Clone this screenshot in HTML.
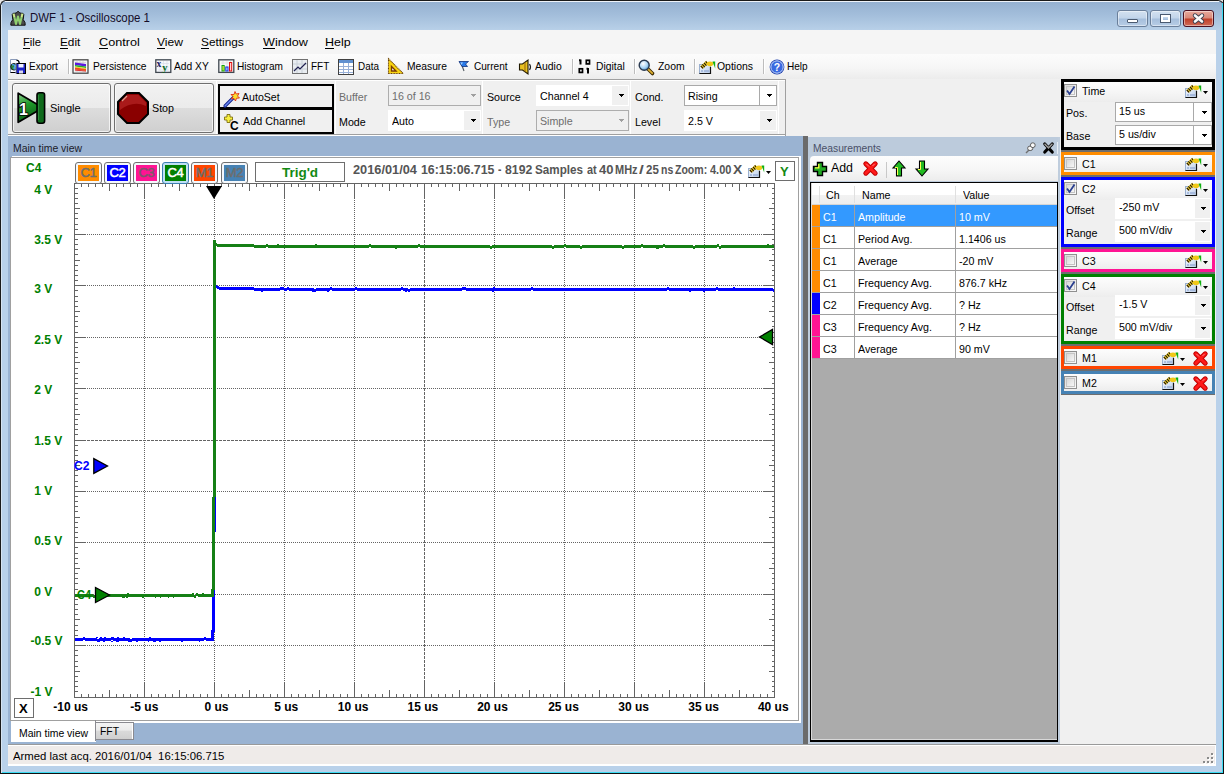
<!DOCTYPE html>
<html><head><meta charset="utf-8">
<style>
*{box-sizing:border-box}
html,body{margin:0;padding:0;width:1224px;height:774px;overflow:hidden;background:#e8e8e8}
body{position:relative;font-family:"Liberation Sans",sans-serif;font-size:11.5px;color:#000}
.a{position:absolute}
.t{position:absolute;white-space:nowrap;line-height:1}
svg{overflow:visible}
u{text-decoration:none;border-bottom:1px solid currentColor;display:inline-block;line-height:0.95}
</style></head><body>
<div class="a" style="left:0px;top:0px;width:1224px;height:774px;background:linear-gradient(#94b0d0 0px,#a3bedb 14px,#b8d0e8 29px,#b9d1ea 30px);border:1px solid #1a1a1a;border-right-color:#101010;border-bottom-color:#101010;border-radius:6px 6px 0 0"></div>
<div class="a" style="left:1223px;top:0px;width:1px;height:774px;background:#101010"></div>
<div class="a" style="left:0px;top:773px;width:1224px;height:1px;background:#101010"></div>
<div class="a" style="left:1222px;top:3px;width:1px;height:770px;background:#3cdcf4"></div>
<div class="a" style="left:1px;top:772px;width:1222px;height:1px;background:#3cdcf4"></div>
<div class="a" style="left:5px;top:1px;width:1214px;height:1px;background:#eef3f9"></div>
<div class="a" style="left:1px;top:5px;width:1px;height:768px;background:#d7e4f1"></div>
<svg class="a" style="left:10px;top:10px;" width="16" height="16" viewBox="0 0 16 16">
<path d="M0.8 15.2 L1 12.5 L2.8 9.5 L2.2 4.5 Q3.2 2.5 5 3.3 L6.8 2.6 Q8 -0.2 9.4 2.6 L11 3.3 Q12.8 2.5 13.8 4.5 L13.2 9.5 L15 12.5 L15.2 15.2 Z" fill="#4a4a4a" stroke="#101010" stroke-width="1"/>
<path d="M3.6 3.8 L6 14 L8 6.5 L10 14 L12.4 3.8" fill="none" stroke="#8fd070" stroke-width="2" stroke-linejoin="round"/>
<path d="M3.6 3.8 L4.4 7 M12.4 3.8 L11.6 7" stroke="#d8e890" stroke-width="1.6"/>
</svg>
<div class="t" style="left:30px;top:12.49px;font-size:12.6px;color:#140c28;transform:scaleX(0.9068);transform-origin:0 0;">DWF 1 - Oscilloscope 1</div>
<div class="a" style="left:1117px;top:10px;width:31px;height:17px;background:linear-gradient(#d3e1f0 0,#c2d5ea 45%,#a6bfdc 55%,#b7cde6 100%);border:1px solid #6a7f9a;border-radius:3px;box-shadow:inset 0 0 0 1px rgba(255,255,255,0.45)"></div>
<div class="a" style="left:1150px;top:10px;width:31px;height:17px;background:linear-gradient(#d3e1f0 0,#c2d5ea 45%,#a6bfdc 55%,#b7cde6 100%);border:1px solid #6a7f9a;border-radius:3px;box-shadow:inset 0 0 0 1px rgba(255,255,255,0.45)"></div>
<div class="a" style="left:1183px;top:10px;width:31px;height:17px;background:linear-gradient(#e8a99c 0,#d98a7a 45%,#c0402a 55%,#cf6b58 100%);border:1px solid #4a1020;border-radius:3px;box-shadow:inset 0 0 0 1px rgba(255,255,255,0.45)"></div>
<div class="a" style="left:1127px;top:19px;width:11px;height:4px;background:#fff;border:1px solid #4a5a70;border-radius:1px"></div>
<div class="a" style="left:1160px;top:14px;width:11px;height:9px;background:transparent;border:3px solid #fff;outline:1px solid #4a5a70;outline-offset:-1px"></div>
<svg class="a" style="left:1193px;top:14px;" width="11" height="9" viewBox="0 0 11 9"><path d="M2 1.5 L9 7.5 M9 1.5 L2 7.5" stroke="#3a4050" stroke-width="4.4" stroke-linecap="round"/><path d="M2 1.5 L9 7.5 M9 1.5 L2 7.5" stroke="#fafafa" stroke-width="2.6" stroke-linecap="round"/></svg>
<div class="a" style="left:8px;top:30px;width:1208px;height:24px;background:#f5f5f5"></div>
<div class="t" style="left:23.1px;top:36.97px;font-size:11.8px;color:#000;transform:scaleX(0.9519);transform-origin:0 0;">File</div>
<div class="a" style="left:23px;top:48px;width:7px;height:1px;background:#000"></div>
<div class="t" style="left:60.1px;top:36.97px;font-size:11.8px;color:#000;transform:scaleX(0.9983);transform-origin:0 0;">Edit</div>
<div class="a" style="left:60px;top:48px;width:8px;height:1px;background:#000"></div>
<div class="t" style="left:98.6px;top:36.97px;font-size:11.8px;color:#000;transform:scaleX(1.0725);transform-origin:0 0;">Control</div>
<div class="a" style="left:99px;top:48px;width:9px;height:1px;background:#000"></div>
<div class="t" style="left:157.4px;top:36.97px;font-size:11.8px;color:#000;transform:scaleX(1.0251);transform-origin:0 0;">View</div>
<div class="a" style="left:157px;top:48px;width:8px;height:1px;background:#000"></div>
<div class="t" style="left:201.2px;top:36.97px;font-size:11.8px;color:#000;transform:scaleX(1.0015);transform-origin:0 0;">Settings</div>
<div class="a" style="left:201px;top:48px;width:8px;height:1px;background:#000"></div>
<div class="t" style="left:262.6px;top:36.97px;font-size:11.8px;color:#000;transform:scaleX(1.0674);transform-origin:0 0;">Window</div>
<div class="a" style="left:263px;top:48px;width:12px;height:1px;background:#000"></div>
<div class="t" style="left:325.40000000000003px;top:36.97px;font-size:11.8px;color:#000;transform:scaleX(1.059);transform-origin:0 0;">Help</div>
<div class="a" style="left:325px;top:48px;width:9px;height:1px;background:#000"></div>
<div class="a" style="left:8px;top:54px;width:1208px;height:25px;background:linear-gradient(#fcfcfc,#f6f6f6 55%,#ececec)"></div>
<div class="t" style="left:29.1px;top:60.14px;font-size:11.6px;color:#000;transform:scaleX(0.862);transform-origin:0 0;">Export</div>
<svg class="a" style="left:8px;top:59px;" width="16" height="16" viewBox="0 0 16 16">
<path d="M2.5 0.5 H9 L11.5 3 V13.5 H2.5 Z" fill="#fbfbff" stroke="#8a9ab8"/>
<path d="M2.5 13.5 H10" stroke="#000" stroke-width="1"/>
<path d="M8.5 1.5 Q11 1 11 4" stroke="#000" stroke-width="1.2" fill="none"/>
<circle cx="6" cy="7.8" r="3.3" fill="#2a8a3a" stroke="#101010" stroke-width="0.9"/>
<path d="M4 6 Q6 5 7 7 Q5.5 9 6.5 10.5" stroke="#50a0ff" stroke-width="1.3" fill="none"/>
<rect x="8.5" y="4.5" width="9" height="10" fill="#1c22c8" stroke="#000" stroke-width="1"/>
<rect x="10.5" y="5" width="5" height="3.5" fill="#f0f0ff"/>
<rect x="11" y="11.5" width="4" height="3" fill="#d8d8f0"/>
<path d="M8 4 V15" stroke="#a0a8f0" stroke-width="1"/>
</svg>
<div class="t" style="left:92.5px;top:60.14px;font-size:11.6px;color:#000;transform:scaleX(0.8827);transform-origin:0 0;">Persistence</div>
<svg class="a" style="left:72px;top:59px;" width="16" height="16" viewBox="0 0 16 16">
<rect x="1" y="0.8" width="15" height="13.4" fill="#f4f4f4" stroke="#404040" stroke-width="1.2"/>
<path d="M3 3.5 H14 M3 12 H14 M5 2 V13 M8 2 V13 M11 2 V13" stroke="#d0d0d0" stroke-width="0.8"/>
<path d="M3 3.5 L14 5 L14 7.5 L3 6 Z" fill="#5a18e0"/>
<path d="M3 6 L14 7.5 L14 9 L3 7.5 Z" fill="#20b030"/>
<path d="M3 7.5 L14 9 L14 10 L3 8.5 Z" fill="#e8e020"/>
<path d="M3 8.5 L14 10 L14 12 L3 10.5 Z" fill="#f0501a"/>
<path d="M3 10.5 L14 12 L14 12.5 L3 11.5 Z" fill="#e01010"/>
</svg>
<div class="t" style="left:174px;top:60.14px;font-size:11.6px;color:#000;transform:scaleX(0.8846);transform-origin:0 0;">Add XY</div>
<svg class="a" style="left:154.5px;top:59px;" width="16" height="16" viewBox="0 0 16 16">
<rect x="0.8" y="0.8" width="15" height="12.6" fill="#f6f8fb" stroke="#404850" stroke-width="1.3"/>
<path d="M3 4.5 H14 M3 8 H14 M3 11 H14 M5 2 V13 M8.5 2 V13 M12 2 V13" stroke="#d8dde8" stroke-width="0.7"/>
<text x="1.5" y="7.5" font-family="Liberation Serif" font-size="9.5" font-weight="bold" fill="#1a1a60">x</text>
<text x="7.3" y="11.8" font-family="Liberation Serif" font-size="10.5" font-weight="bold" fill="#0a6a1a">y</text>
</svg>
<div class="t" style="left:237.3px;top:60.14px;font-size:11.6px;color:#000;transform:scaleX(0.8702);transform-origin:0 0;">Histogram</div>
<svg class="a" style="left:217.5px;top:59px;" width="16" height="16" viewBox="0 0 16 16">
<rect x="0.8" y="0.8" width="15" height="12.6" fill="#f8f8f8" stroke="#404850" stroke-width="1.3"/>
<path d="M3 4 H14 M5 2 V13 M9 2 V13 M12.5 2 V13" stroke="#dadada" stroke-width="0.7"/>
<rect x="4" y="6.5" width="2.2" height="5.5" fill="#f0f040" stroke="#10a010" stroke-width="1"/>
<rect x="7.8" y="8" width="2.2" height="4" fill="#c0d0ff" stroke="#1030e0" stroke-width="1"/>
<rect x="11.5" y="3.5" width="2.2" height="8.5" fill="#ffd0d0" stroke="#e01010" stroke-width="1"/>
</svg>
<div class="t" style="left:311.2px;top:60.14px;font-size:11.6px;color:#000;transform:scaleX(0.8562);transform-origin:0 0;">FFT</div>
<svg class="a" style="left:292px;top:59px;" width="16" height="16" viewBox="0 0 16 16">
<rect x="0.5" y="0.5" width="15" height="14" fill="#e8ecf0" stroke="#707070"/>
<path d="M1 5 H15 M1 10 H15 M5 1 V14 M10 1 V14" stroke="#c8d0d8"/>
<path d="M2 12 L6 8 L8 10 L14 4" stroke="#202050" stroke-width="1.2" fill="none"/>
</svg>
<div class="t" style="left:357.5px;top:60.14px;font-size:11.6px;color:#000;transform:scaleX(0.853);transform-origin:0 0;">Data</div>
<svg class="a" style="left:338px;top:59px;" width="16" height="16" viewBox="0 0 16 16">
<rect x="0.5" y="0.5" width="15" height="15" fill="#fff" stroke="#404040"/>
<rect x="1" y="1" width="14" height="3" fill="#6090d0"/>
<path d="M1 7.5 H15 M1 10.5 H15 M1 13.5 H15 M5.5 4 V15 M10.5 4 V15" stroke="#98b0d8"/>
</svg>
<div class="t" style="left:407px;top:60.14px;font-size:11.6px;color:#000;transform:scaleX(0.8863);transform-origin:0 0;">Measure</div>
<div class="t" style="left:474px;top:60.14px;font-size:11.6px;color:#000;transform:scaleX(0.8686);transform-origin:0 0;">Current</div>
<div class="t" style="left:535.3px;top:60.14px;font-size:11.6px;color:#000;transform:scaleX(0.8999);transform-origin:0 0;">Audio</div>
<svg class="a" style="left:518px;top:59px;" width="16" height="16" viewBox="0 0 16 16">
<path d="M1.5 5 H4.5 L10 1 V15 L4.5 11 H1.5 Z" fill="#e8c020" stroke="#201800" stroke-width="1.1"/>
<path d="M7 3.5 V12.5" stroke="#a07010" stroke-width="1.2"/>
<path d="M11.5 5 Q13.5 8 11.5 11" stroke="#202020" stroke-width="1.2" fill="none"/>
</svg>
<div class="t" style="left:595.7px;top:60.14px;font-size:11.6px;color:#000;transform:scaleX(0.8903);transform-origin:0 0;">Digital</div>
<div class="t" style="left:657.9px;top:60.14px;font-size:11.6px;color:#000;transform:scaleX(0.8971);transform-origin:0 0;">Zoom</div>
<svg class="a" style="left:638px;top:59px;" width="16" height="16" viewBox="0 0 16 16">
<defs><radialGradient id="zg" cx="0.4" cy="0.35" r="0.7"><stop offset="0" stop-color="#ffffff"/><stop offset="0.6" stop-color="#a8d4f4"/><stop offset="1" stop-color="#4a90c8"/></radialGradient></defs>
<path d="M9.5 9.5 L14.5 14.5" stroke="#3a2a00" stroke-width="3.6" stroke-linecap="round"/>
<path d="M9.8 9.8 L14.2 14.2" stroke="#e0b030" stroke-width="1.8" stroke-linecap="round"/>
<circle cx="6.2" cy="6.2" r="5" fill="url(#zg)" stroke="#2a3a50" stroke-width="1.4"/>
</svg>
<div class="t" style="left:717px;top:60.14px;font-size:11.6px;color:#000;transform:scaleX(0.9005);transform-origin:0 0;">Options</div>
<div class="t" style="left:787px;top:60.14px;font-size:11.6px;color:#000;transform:scaleX(0.8676);transform-origin:0 0;">Help</div>
<svg class="a" style="left:769px;top:59px;" width="16" height="16" viewBox="0 0 16 16">
<circle cx="8" cy="8" r="7.4" fill="#1a3aa8"/>
<circle cx="8" cy="8" r="6.2" fill="#3a6ae0" stroke="#c8dcff" stroke-width="1"/>
<text x="8" y="12.2" text-anchor="middle" font-family="Liberation Sans" font-size="10.5" font-weight="bold" fill="#fff">?</text>
</svg>
<svg class="a" style="left:387px;top:58px;" width="17" height="17" viewBox="0 0 17 17">
<path d="M1.5 0.8 L16.2 15.5 L1.5 15.5 Z" fill="#f8d410" stroke="#6a4000" stroke-width="1.1" stroke-dasharray="1 0.6"/>
<path d="M4.5 8.5 L9 13 L4.5 13 Z" fill="#fff" stroke="#7a3a00" stroke-width="1.4"/>
</svg>
<svg class="a" style="left:458px;top:60px;" width="12" height="12" viewBox="0 0 12 12">
<path d="M3 3 L6 11" stroke="#505860" stroke-width="1.1"/>
<path d="M1 1.5 L10.5 1.5 L7.5 4 L9.5 6.5 L4 6.5 Z" fill="#2a7ae8" stroke="#10307a" stroke-width="0.8"/>
<path d="M2.5 2.5 L5 2.5 L3.5 5 Z" fill="#a0d0ff"/>
</svg>
<svg class="a" style="left:578px;top:59px;" width="13" height="15" viewBox="0 0 13 15">
<path d="M2.5 0.5 V5.5 M1 1.3 H2.5" stroke="#000" stroke-width="2"/>
<rect x="8.3" y="1.3" width="3.2" height="3.6" fill="none" stroke="#000" stroke-width="1.7"/>
<rect x="1.3" y="9.8" width="3.2" height="3.6" fill="none" stroke="#000" stroke-width="1.7"/>
<path d="M10 9 V14.5 M8.5 9.8 H10" stroke="#000" stroke-width="2"/>
</svg>
<div class="a" style="left:68px;top:59px;width:2px;height:15px;border-left:1px solid #bdbdbd;border-right:1px solid #fff"></div>
<div class="a" style="left:572px;top:59px;width:2px;height:15px;border-left:1px solid #bdbdbd;border-right:1px solid #fff"></div>
<div class="a" style="left:634px;top:59px;width:2px;height:15px;border-left:1px solid #bdbdbd;border-right:1px solid #fff"></div>
<div class="a" style="left:694px;top:59px;width:2px;height:15px;border-left:1px solid #bdbdbd;border-right:1px solid #fff"></div>
<div class="a" style="left:763px;top:59px;width:2px;height:15px;border-left:1px solid #bdbdbd;border-right:1px solid #fff"></div>
<div class="a" style="left:8px;top:79px;width:1052px;height:57px;background:#f0f0f0"></div>
<div class="a" style="left:8px;top:79px;width:778px;height:1px;background:#a0a0a0"></div>
<div class="a" style="left:8px;top:80px;width:778px;height:1px;background:#fff"></div>
<div class="a" style="left:8px;top:134px;width:778px;height:1px;background:#a0a0a0"></div>
<div class="a" style="left:8px;top:135px;width:778px;height:1px;background:#fff"></div>
<div class="a" style="left:785px;top:79px;width:1px;height:57px;background:#a0a0a0"></div>
<div class="a" style="left:12px;top:83px;width:99px;height:50px;border:1px solid #707070;border-radius:3px;background:linear-gradient(#f2f2f2 0,#ebebeb 49%,#dddddd 50%,#cfcfcf 100%);box-shadow:inset 0 0 0 1px rgba(255,255,255,0.7)"></div>
<div class="a" style="left:114px;top:83px;width:100px;height:50px;border:1px solid #707070;border-radius:3px;background:linear-gradient(#f2f2f2 0,#ebebeb 49%,#dddddd 50%,#cfcfcf 100%);box-shadow:inset 0 0 0 1px rgba(255,255,255,0.7)"></div>
<div class="t" style="left:50.2px;top:101.64px;font-size:11.6px;color:#000;transform:scaleX(0.952);transform-origin:0 0;">Single</div>
<div class="t" style="left:152px;top:101.94px;font-size:11.6px;color:#000;transform:scaleX(0.9219);transform-origin:0 0;">Stop</div>
<svg class="a" style="left:17px;top:92px;" width="28" height="32" viewBox="0 0 28 32">
<defs><linearGradient id="sg" x1="0" y1="0" x2="0.3" y2="1"><stop offset="0" stop-color="#8fd08f"/><stop offset="0.45" stop-color="#1f9a2a"/><stop offset="1" stop-color="#0b5a15"/></linearGradient></defs>
<path d="M1.2 1.2 L26 15.8 L1.2 30.2 Z" fill="url(#sg)" stroke="#000" stroke-width="1.8" stroke-linejoin="round"/>
<rect x="20" y="0.8" width="7.6" height="30.4" rx="2.2" fill="#0f6a1c" stroke="#000" stroke-width="1.6"/>
<path d="M21.5 3 V28" stroke="#2a8a3a" stroke-width="1"/>
<text x="2" y="22.5" font-family="Liberation Sans" font-size="16" font-weight="bold" fill="#fff" stroke="#000" stroke-width="1.6" paint-order="stroke">1</text>
</svg>
<svg class="a" style="left:117px;top:92px;" width="32" height="32" viewBox="0 0 32 32">
<path d="M10 1 H22 L31 10 V22 L22 31 H10 L1 22 V10 Z" fill="#8a0000" stroke="#000" stroke-width="2"/>
<path d="M10.5 3 H21.5 L29 10.5 V14 Q16 8 3 18 V10.5 Z" fill="#b02020" opacity="0.8"/>
<path d="M5 9 L10 4" stroke="#e0a090" stroke-width="1.2"/>
</svg>
<div class="a" style="left:216px;top:81px;width:1px;height:53px;background:#a0a0a0;border-right:1px solid #fff"></div>
<div class="a" style="left:218px;top:84px;width:116px;height:25px;border:2px solid #000;background:#f0f0f0"></div>
<div class="a" style="left:218px;top:108px;width:116px;height:26px;border:2px solid #000;background:#f0f0f0"></div>
<div class="t" style="left:242px;top:90.94px;font-size:11.6px;color:#000;transform:scaleX(0.9134);transform-origin:0 0;">AutoSet</div>
<div class="t" style="left:243px;top:115.44px;font-size:11.6px;color:#000;transform:scaleX(0.9288);transform-origin:0 0;">Add Channel</div>
<svg class="a" style="left:223px;top:91px;" width="17" height="17" viewBox="0 0 17 17">
<path d="M2 15 L11 6" stroke="#10208a" stroke-width="3.2" stroke-linecap="round"/>
<path d="M2 15 L11 6" stroke="#6a8af0" stroke-width="1.4" stroke-linecap="round"/>
<path d="M12 0.5 L13.2 3 L16 2.5 L14.5 5 L16.5 7 L13.5 7.2 L12.5 10 L11 7.5 L8.5 8 L10 5.5 L8 3.5 L11 3.5 Z" fill="#f8e030" stroke="#e03010" stroke-width="0.9"/>
</svg>
<svg class="a" style="left:224px;top:114px;" width="17" height="17" viewBox="0 0 17 17">
<path d="M3 0.5 H6 V3 H8.5 V6 H6 V8.5 H3 V6 H0.5 V3 H3 Z" fill="#f8f040" stroke="#807010" stroke-width="0.9"/>
<text x="6" y="16" font-family="Liberation Sans" font-size="12" font-weight="bold" fill="#000">C</text>
</svg>
<div class="a" style="left:335px;top:81px;width:1px;height:53px;background:#a0a0a0;border-right:1px solid #fff"></div>
<div class="a" style="left:482px;top:81px;width:1px;height:53px;background:#a0a0a0;border-right:1px solid #fff"></div>
<div class="a" style="left:630px;top:81px;width:1px;height:53px;background:#a0a0a0;border-right:1px solid #fff"></div>
<div class="a" style="left:778px;top:81px;width:1px;height:53px;background:#a0a0a0;border-right:1px solid #fff"></div>
<div class="t" style="left:339px;top:91.14px;font-size:11.6px;color:#6d6d6d;transform:scaleX(0.92);transform-origin:0 0;">Buffer</div>
<div class="t" style="left:339px;top:116.14px;font-size:11.6px;color:#000;transform:scaleX(0.92);transform-origin:0 0;">Mode</div>
<div class="a" style="left:388px;top:85px;width:93px;height:21px;background:#f0f0f0;border:1px solid #adadad"></div>
<div class="t" style="left:392px;top:90.14px;font-size:11.6px;color:#6d6d6d;transform:scaleX(0.92);transform-origin:0 0;">16 of 16</div>
<svg class="a" style="left:470px;top:94px;shape-rendering:crispEdges" width="6" height="3" viewBox="0 0 6 3"><path d="M0 0 L6 0 L3 3 Z" fill="#a0a0a0"/></svg>
<div class="a" style="left:388px;top:110px;width:93px;height:21px;background:#fff"></div>
<div class="a" style="left:464px;top:111px;width:16px;height:19px;background:#f0f0f0"></div>
<div class="t" style="left:392px;top:115.14px;font-size:11.6px;color:#000;transform:scaleX(0.92);transform-origin:0 0;">Auto</div>
<svg class="a" style="left:470px;top:119px;shape-rendering:crispEdges" width="6" height="3" viewBox="0 0 6 3"><path d="M0 0 L6 0 L3 3 Z" fill="#000"/></svg>
<div class="t" style="left:487px;top:91.14px;font-size:11.6px;color:#000;transform:scaleX(0.92);transform-origin:0 0;">Source</div>
<div class="t" style="left:487px;top:116.14px;font-size:11.6px;color:#6d6d6d;transform:scaleX(0.92);transform-origin:0 0;">Type</div>
<div class="a" style="left:536px;top:85px;width:93px;height:21px;background:#fff"></div>
<div class="a" style="left:612px;top:86px;width:16px;height:19px;background:#f0f0f0"></div>
<div class="t" style="left:540px;top:90.14px;font-size:11.6px;color:#000;transform:scaleX(0.92);transform-origin:0 0;">Channel 4</div>
<svg class="a" style="left:618px;top:94px;shape-rendering:crispEdges" width="6" height="3" viewBox="0 0 6 3"><path d="M0 0 L6 0 L3 3 Z" fill="#000"/></svg>
<div class="a" style="left:536px;top:110px;width:93px;height:21px;background:#f0f0f0;border:1px solid #adadad"></div>
<div class="t" style="left:540px;top:115.14px;font-size:11.6px;color:#6d6d6d;transform:scaleX(0.92);transform-origin:0 0;">Simple</div>
<svg class="a" style="left:618px;top:119px;shape-rendering:crispEdges" width="6" height="3" viewBox="0 0 6 3"><path d="M0 0 L6 0 L3 3 Z" fill="#a0a0a0"/></svg>
<div class="t" style="left:635px;top:91.14px;font-size:11.6px;color:#000;transform:scaleX(0.92);transform-origin:0 0;">Cond.</div>
<div class="t" style="left:635px;top:116.14px;font-size:11.6px;color:#000;transform:scaleX(0.92);transform-origin:0 0;">Level</div>
<div class="a" style="left:684px;top:85px;width:93px;height:21px;background:#fff;border:1px solid #a9a9a9"></div>
<div class="a" style="left:759px;top:86px;width:1px;height:19px;background:#a9a9a9"></div>
<div class="t" style="left:688px;top:90.14px;font-size:11.6px;color:#000;transform:scaleX(0.92);transform-origin:0 0;">Rising</div>
<svg class="a" style="left:766px;top:94px;shape-rendering:crispEdges" width="6" height="3" viewBox="0 0 6 3"><path d="M0 0 L6 0 L3 3 Z" fill="#000"/></svg>
<div class="a" style="left:684px;top:110px;width:93px;height:21px;background:#fff"></div>
<div class="a" style="left:760px;top:111px;width:16px;height:19px;background:#f0f0f0"></div>
<div class="t" style="left:688px;top:115.14px;font-size:11.6px;color:#000;transform:scaleX(0.92);transform-origin:0 0;">2.5 V</div>
<svg class="a" style="left:766px;top:119px;shape-rendering:crispEdges" width="6" height="3" viewBox="0 0 6 3"><path d="M0 0 L6 0 L3 3 Z" fill="#000"/></svg>
<div class="a" style="left:8px;top:136px;width:1052px;height:608px;background:#9ab3d2"></div>
<div class="a" style="left:8px;top:744px;width:1208px;height:22px;background:#efebe9;border-top:1px solid #9a9a9a;border-bottom:2px solid #fff"></div>
<div class="a" style="left:8px;top:745px;width:1208px;height:1px;background:#fff"></div>
<div class="a" style="left:1211px;top:753px;width:2px;height:2px;background:#8a8a8a;box-shadow:1px 1px 0 #fff"></div>
<div class="a" style="left:1207px;top:757px;width:2px;height:2px;background:#8a8a8a;box-shadow:1px 1px 0 #fff"></div>
<div class="a" style="left:1211px;top:757px;width:2px;height:2px;background:#8a8a8a;box-shadow:1px 1px 0 #fff"></div>
<div class="a" style="left:1203px;top:761px;width:2px;height:2px;background:#8a8a8a;box-shadow:1px 1px 0 #fff"></div>
<div class="a" style="left:1207px;top:761px;width:2px;height:2px;background:#8a8a8a;box-shadow:1px 1px 0 #fff"></div>
<div class="a" style="left:1211px;top:761px;width:2px;height:2px;background:#8a8a8a;box-shadow:1px 1px 0 #fff"></div>
<div class="a" style="left:1215px;top:745px;width:1px;height:20px;background:#fff"></div>
<div class="t" style="left:12.5px;top:749.64px;font-size:11.6px;color:#000;transform:scaleX(0.9789);transform-origin:0 0;">Armed last acq. 2016/01/04&nbsp; 16:15:06.715</div>
<svg class="a" style="left:699px;top:60px;" width="17" height="14" viewBox="0 0 17 14">
<defs><linearGradient id="docg2" x1="0" y1="0" x2="1" y2="1"><stop offset="0" stop-color="#f4f8fe"/><stop offset="1" stop-color="#b8cce8"/></linearGradient></defs>
<rect x="0.5" y="4.5" width="11" height="9" fill="url(#docg2)" stroke="#9ab0d0"/>
<path d="M0.5 13.5 H11.5 V7" stroke="#111" stroke-width="1.2" fill="none"/>
<path d="M2 11 H4 M5 11 H10" stroke="#9ab0d8" stroke-width="1.3"/>
<circle cx="3.3" cy="7.3" r="0.9" fill="#d02020"/>
<path d="M2.5 7.5 L8.5 2.2" stroke="#f0d030" stroke-width="3.6"/>
<path d="M2.5 7.5 L8.5 2.2" stroke="#201800" stroke-width="3.6" stroke-dasharray="1.1 1.1"/>
<ellipse cx="11" cy="3.8" rx="3.3" ry="2.4" fill="#f0c818"/>
<path d="M13.5 1.5 L16.2 1.5 L16.2 8.5 Z" fill="#10b010"/>
</svg>
<div class="t" style="left:13px;top:142.14px;font-size:11.6px;color:#1b1b2b;transform:scaleX(0.8995);transform-origin:0 0;">Main time view</div>
<div class="a" style="left:10px;top:157px;width:789px;height:564px;background:#fff;border:1px solid #a0a0a0;border-right-color:#a0a0a0"></div>
<div class="a" style="left:12px;top:156px;width:789px;height:1px;background:#fff"></div>
<div class="a" style="left:799px;top:157px;width:2px;height:566px;background:#fff"></div>
<div class="a" style="left:11px;top:721px;width:790px;height:2px;background:#fff"></div>
<div class="a" style="left:11px;top:721px;width:85px;height:21px;background:#fff"></div>
<div class="t" style="left:18.5px;top:726.64px;font-size:11.6px;color:#000;transform:scaleX(0.8995);transform-origin:0 0;">Main time view</div>
<div class="a" style="left:95px;top:720px;width:1px;height:21px;background:#8a8a90"></div>
<div class="a" style="left:96px;top:722px;width:38px;height:18px;background:linear-gradient(#f4f4f4,#ebebeb 45%,#dadada 50%,#cfcfcf);border:1px solid #8a8a90;border-left:none;box-shadow:inset -1px 0 0 #fff"></div>
<div class="t" style="left:100px;top:725.14px;font-size:11.6px;color:#000;transform:scaleX(0.8938);transform-origin:0 0;">FFT</div>
<svg class="a" style="left:0px;top:0px;left:0;top:0" width="1224" height="774" viewBox="0 0 1224 774"><line x1="144.5" y1="184" x2="144.5" y2="697" stroke="#646464" stroke-width="1" stroke-dasharray="1 1"/><line x1="214.5" y1="184" x2="214.5" y2="697" stroke="#646464" stroke-width="1" stroke-dasharray="1 1"/><line x1="284.5" y1="184" x2="284.5" y2="697" stroke="#646464" stroke-width="1" stroke-dasharray="1 1"/><line x1="354.5" y1="184" x2="354.5" y2="697" stroke="#646464" stroke-width="1" stroke-dasharray="1 1"/><line x1="424.5" y1="184" x2="424.5" y2="697" stroke="#646464" stroke-width="1" stroke-dasharray="3 1"/><line x1="494.5" y1="184" x2="494.5" y2="697" stroke="#646464" stroke-width="1" stroke-dasharray="1 1"/><line x1="564.5" y1="184" x2="564.5" y2="697" stroke="#646464" stroke-width="1" stroke-dasharray="1 1"/><line x1="634.5" y1="184" x2="634.5" y2="697" stroke="#646464" stroke-width="1" stroke-dasharray="1 1"/><line x1="704.5" y1="184" x2="704.5" y2="697" stroke="#646464" stroke-width="1" stroke-dasharray="1 1"/><line x1="75" y1="234.5" x2="774" y2="234.5" stroke="#646464" stroke-width="1" stroke-dasharray="1 1"/><line x1="75" y1="285.5" x2="774" y2="285.5" stroke="#646464" stroke-width="1" stroke-dasharray="1 1"/><line x1="75" y1="337.5" x2="774" y2="337.5" stroke="#646464" stroke-width="1" stroke-dasharray="1 1"/><line x1="75" y1="388.5" x2="774" y2="388.5" stroke="#646464" stroke-width="1" stroke-dasharray="1 1"/><line x1="75" y1="440.5" x2="774" y2="440.5" stroke="#646464" stroke-width="1" stroke-dasharray="3 1"/><line x1="75" y1="491.5" x2="774" y2="491.5" stroke="#646464" stroke-width="1" stroke-dasharray="1 1"/><line x1="75" y1="542.5" x2="774" y2="542.5" stroke="#646464" stroke-width="1" stroke-dasharray="1 1"/><line x1="75" y1="594.5" x2="774" y2="594.5" stroke="#646464" stroke-width="1" stroke-dasharray="1 1"/><line x1="75" y1="645.5" x2="774" y2="645.5" stroke="#646464" stroke-width="1" stroke-dasharray="1 1"/><rect x="74.5" y="183.5" width="700" height="514" fill="none" stroke="#646464" stroke-width="1"/><line x1="74.5" y1="183" x2="74.5" y2="198" stroke="#646464"/><line x1="74.5" y1="697" x2="74.5" y2="683" stroke="#646464"/><line x1="81.5" y1="183" x2="81.5" y2="187" stroke="#646464"/><line x1="81.5" y1="697" x2="81.5" y2="694" stroke="#646464"/><line x1="88.5" y1="183" x2="88.5" y2="187" stroke="#646464"/><line x1="88.5" y1="697" x2="88.5" y2="694" stroke="#646464"/><line x1="95.5" y1="183" x2="95.5" y2="187" stroke="#646464"/><line x1="95.5" y1="697" x2="95.5" y2="694" stroke="#646464"/><line x1="102.5" y1="183" x2="102.5" y2="187" stroke="#646464"/><line x1="102.5" y1="697" x2="102.5" y2="694" stroke="#646464"/><line x1="109.5" y1="183" x2="109.5" y2="191" stroke="#646464"/><line x1="109.5" y1="697" x2="109.5" y2="690" stroke="#646464"/><line x1="116.5" y1="183" x2="116.5" y2="187" stroke="#646464"/><line x1="116.5" y1="697" x2="116.5" y2="694" stroke="#646464"/><line x1="123.5" y1="183" x2="123.5" y2="187" stroke="#646464"/><line x1="123.5" y1="697" x2="123.5" y2="694" stroke="#646464"/><line x1="130.5" y1="183" x2="130.5" y2="187" stroke="#646464"/><line x1="130.5" y1="697" x2="130.5" y2="694" stroke="#646464"/><line x1="137.5" y1="183" x2="137.5" y2="187" stroke="#646464"/><line x1="137.5" y1="697" x2="137.5" y2="694" stroke="#646464"/><line x1="144.5" y1="183" x2="144.5" y2="198" stroke="#646464"/><line x1="144.5" y1="697" x2="144.5" y2="683" stroke="#646464"/><line x1="151.5" y1="183" x2="151.5" y2="187" stroke="#646464"/><line x1="151.5" y1="697" x2="151.5" y2="694" stroke="#646464"/><line x1="158.5" y1="183" x2="158.5" y2="187" stroke="#646464"/><line x1="158.5" y1="697" x2="158.5" y2="694" stroke="#646464"/><line x1="165.5" y1="183" x2="165.5" y2="187" stroke="#646464"/><line x1="165.5" y1="697" x2="165.5" y2="694" stroke="#646464"/><line x1="172.5" y1="183" x2="172.5" y2="187" stroke="#646464"/><line x1="172.5" y1="697" x2="172.5" y2="694" stroke="#646464"/><line x1="179.5" y1="183" x2="179.5" y2="191" stroke="#646464"/><line x1="179.5" y1="697" x2="179.5" y2="690" stroke="#646464"/><line x1="186.5" y1="183" x2="186.5" y2="187" stroke="#646464"/><line x1="186.5" y1="697" x2="186.5" y2="694" stroke="#646464"/><line x1="193.5" y1="183" x2="193.5" y2="187" stroke="#646464"/><line x1="193.5" y1="697" x2="193.5" y2="694" stroke="#646464"/><line x1="200.5" y1="183" x2="200.5" y2="187" stroke="#646464"/><line x1="200.5" y1="697" x2="200.5" y2="694" stroke="#646464"/><line x1="207.5" y1="183" x2="207.5" y2="187" stroke="#646464"/><line x1="207.5" y1="697" x2="207.5" y2="694" stroke="#646464"/><line x1="214.5" y1="183" x2="214.5" y2="198" stroke="#646464"/><line x1="214.5" y1="697" x2="214.5" y2="683" stroke="#646464"/><line x1="221.5" y1="183" x2="221.5" y2="187" stroke="#646464"/><line x1="221.5" y1="697" x2="221.5" y2="694" stroke="#646464"/><line x1="228.5" y1="183" x2="228.5" y2="187" stroke="#646464"/><line x1="228.5" y1="697" x2="228.5" y2="694" stroke="#646464"/><line x1="235.5" y1="183" x2="235.5" y2="187" stroke="#646464"/><line x1="235.5" y1="697" x2="235.5" y2="694" stroke="#646464"/><line x1="242.5" y1="183" x2="242.5" y2="187" stroke="#646464"/><line x1="242.5" y1="697" x2="242.5" y2="694" stroke="#646464"/><line x1="249.5" y1="183" x2="249.5" y2="191" stroke="#646464"/><line x1="249.5" y1="697" x2="249.5" y2="690" stroke="#646464"/><line x1="256.5" y1="183" x2="256.5" y2="187" stroke="#646464"/><line x1="256.5" y1="697" x2="256.5" y2="694" stroke="#646464"/><line x1="263.5" y1="183" x2="263.5" y2="187" stroke="#646464"/><line x1="263.5" y1="697" x2="263.5" y2="694" stroke="#646464"/><line x1="270.5" y1="183" x2="270.5" y2="187" stroke="#646464"/><line x1="270.5" y1="697" x2="270.5" y2="694" stroke="#646464"/><line x1="277.5" y1="183" x2="277.5" y2="187" stroke="#646464"/><line x1="277.5" y1="697" x2="277.5" y2="694" stroke="#646464"/><line x1="284.5" y1="183" x2="284.5" y2="198" stroke="#646464"/><line x1="284.5" y1="697" x2="284.5" y2="683" stroke="#646464"/><line x1="291.5" y1="183" x2="291.5" y2="187" stroke="#646464"/><line x1="291.5" y1="697" x2="291.5" y2="694" stroke="#646464"/><line x1="298.5" y1="183" x2="298.5" y2="187" stroke="#646464"/><line x1="298.5" y1="697" x2="298.5" y2="694" stroke="#646464"/><line x1="305.5" y1="183" x2="305.5" y2="187" stroke="#646464"/><line x1="305.5" y1="697" x2="305.5" y2="694" stroke="#646464"/><line x1="312.5" y1="183" x2="312.5" y2="187" stroke="#646464"/><line x1="312.5" y1="697" x2="312.5" y2="694" stroke="#646464"/><line x1="319.5" y1="183" x2="319.5" y2="191" stroke="#646464"/><line x1="319.5" y1="697" x2="319.5" y2="690" stroke="#646464"/><line x1="326.5" y1="183" x2="326.5" y2="187" stroke="#646464"/><line x1="326.5" y1="697" x2="326.5" y2="694" stroke="#646464"/><line x1="333.5" y1="183" x2="333.5" y2="187" stroke="#646464"/><line x1="333.5" y1="697" x2="333.5" y2="694" stroke="#646464"/><line x1="340.5" y1="183" x2="340.5" y2="187" stroke="#646464"/><line x1="340.5" y1="697" x2="340.5" y2="694" stroke="#646464"/><line x1="347.5" y1="183" x2="347.5" y2="187" stroke="#646464"/><line x1="347.5" y1="697" x2="347.5" y2="694" stroke="#646464"/><line x1="354.5" y1="183" x2="354.5" y2="198" stroke="#646464"/><line x1="354.5" y1="697" x2="354.5" y2="683" stroke="#646464"/><line x1="361.5" y1="183" x2="361.5" y2="187" stroke="#646464"/><line x1="361.5" y1="697" x2="361.5" y2="694" stroke="#646464"/><line x1="368.5" y1="183" x2="368.5" y2="187" stroke="#646464"/><line x1="368.5" y1="697" x2="368.5" y2="694" stroke="#646464"/><line x1="375.5" y1="183" x2="375.5" y2="187" stroke="#646464"/><line x1="375.5" y1="697" x2="375.5" y2="694" stroke="#646464"/><line x1="382.5" y1="183" x2="382.5" y2="187" stroke="#646464"/><line x1="382.5" y1="697" x2="382.5" y2="694" stroke="#646464"/><line x1="389.5" y1="183" x2="389.5" y2="191" stroke="#646464"/><line x1="389.5" y1="697" x2="389.5" y2="690" stroke="#646464"/><line x1="396.5" y1="183" x2="396.5" y2="187" stroke="#646464"/><line x1="396.5" y1="697" x2="396.5" y2="694" stroke="#646464"/><line x1="403.5" y1="183" x2="403.5" y2="187" stroke="#646464"/><line x1="403.5" y1="697" x2="403.5" y2="694" stroke="#646464"/><line x1="410.5" y1="183" x2="410.5" y2="187" stroke="#646464"/><line x1="410.5" y1="697" x2="410.5" y2="694" stroke="#646464"/><line x1="417.5" y1="183" x2="417.5" y2="187" stroke="#646464"/><line x1="417.5" y1="697" x2="417.5" y2="694" stroke="#646464"/><line x1="424.5" y1="183" x2="424.5" y2="198" stroke="#646464"/><line x1="424.5" y1="697" x2="424.5" y2="683" stroke="#646464"/><line x1="431.5" y1="183" x2="431.5" y2="187" stroke="#646464"/><line x1="431.5" y1="697" x2="431.5" y2="694" stroke="#646464"/><line x1="438.5" y1="183" x2="438.5" y2="187" stroke="#646464"/><line x1="438.5" y1="697" x2="438.5" y2="694" stroke="#646464"/><line x1="445.5" y1="183" x2="445.5" y2="187" stroke="#646464"/><line x1="445.5" y1="697" x2="445.5" y2="694" stroke="#646464"/><line x1="452.5" y1="183" x2="452.5" y2="187" stroke="#646464"/><line x1="452.5" y1="697" x2="452.5" y2="694" stroke="#646464"/><line x1="459.5" y1="183" x2="459.5" y2="191" stroke="#646464"/><line x1="459.5" y1="697" x2="459.5" y2="690" stroke="#646464"/><line x1="466.5" y1="183" x2="466.5" y2="187" stroke="#646464"/><line x1="466.5" y1="697" x2="466.5" y2="694" stroke="#646464"/><line x1="473.5" y1="183" x2="473.5" y2="187" stroke="#646464"/><line x1="473.5" y1="697" x2="473.5" y2="694" stroke="#646464"/><line x1="480.5" y1="183" x2="480.5" y2="187" stroke="#646464"/><line x1="480.5" y1="697" x2="480.5" y2="694" stroke="#646464"/><line x1="487.5" y1="183" x2="487.5" y2="187" stroke="#646464"/><line x1="487.5" y1="697" x2="487.5" y2="694" stroke="#646464"/><line x1="494.5" y1="183" x2="494.5" y2="198" stroke="#646464"/><line x1="494.5" y1="697" x2="494.5" y2="683" stroke="#646464"/><line x1="501.5" y1="183" x2="501.5" y2="187" stroke="#646464"/><line x1="501.5" y1="697" x2="501.5" y2="694" stroke="#646464"/><line x1="508.5" y1="183" x2="508.5" y2="187" stroke="#646464"/><line x1="508.5" y1="697" x2="508.5" y2="694" stroke="#646464"/><line x1="515.5" y1="183" x2="515.5" y2="187" stroke="#646464"/><line x1="515.5" y1="697" x2="515.5" y2="694" stroke="#646464"/><line x1="522.5" y1="183" x2="522.5" y2="187" stroke="#646464"/><line x1="522.5" y1="697" x2="522.5" y2="694" stroke="#646464"/><line x1="529.5" y1="183" x2="529.5" y2="191" stroke="#646464"/><line x1="529.5" y1="697" x2="529.5" y2="690" stroke="#646464"/><line x1="536.5" y1="183" x2="536.5" y2="187" stroke="#646464"/><line x1="536.5" y1="697" x2="536.5" y2="694" stroke="#646464"/><line x1="543.5" y1="183" x2="543.5" y2="187" stroke="#646464"/><line x1="543.5" y1="697" x2="543.5" y2="694" stroke="#646464"/><line x1="550.5" y1="183" x2="550.5" y2="187" stroke="#646464"/><line x1="550.5" y1="697" x2="550.5" y2="694" stroke="#646464"/><line x1="557.5" y1="183" x2="557.5" y2="187" stroke="#646464"/><line x1="557.5" y1="697" x2="557.5" y2="694" stroke="#646464"/><line x1="564.5" y1="183" x2="564.5" y2="198" stroke="#646464"/><line x1="564.5" y1="697" x2="564.5" y2="683" stroke="#646464"/><line x1="571.5" y1="183" x2="571.5" y2="187" stroke="#646464"/><line x1="571.5" y1="697" x2="571.5" y2="694" stroke="#646464"/><line x1="578.5" y1="183" x2="578.5" y2="187" stroke="#646464"/><line x1="578.5" y1="697" x2="578.5" y2="694" stroke="#646464"/><line x1="585.5" y1="183" x2="585.5" y2="187" stroke="#646464"/><line x1="585.5" y1="697" x2="585.5" y2="694" stroke="#646464"/><line x1="592.5" y1="183" x2="592.5" y2="187" stroke="#646464"/><line x1="592.5" y1="697" x2="592.5" y2="694" stroke="#646464"/><line x1="599.5" y1="183" x2="599.5" y2="191" stroke="#646464"/><line x1="599.5" y1="697" x2="599.5" y2="690" stroke="#646464"/><line x1="606.5" y1="183" x2="606.5" y2="187" stroke="#646464"/><line x1="606.5" y1="697" x2="606.5" y2="694" stroke="#646464"/><line x1="613.5" y1="183" x2="613.5" y2="187" stroke="#646464"/><line x1="613.5" y1="697" x2="613.5" y2="694" stroke="#646464"/><line x1="620.5" y1="183" x2="620.5" y2="187" stroke="#646464"/><line x1="620.5" y1="697" x2="620.5" y2="694" stroke="#646464"/><line x1="627.5" y1="183" x2="627.5" y2="187" stroke="#646464"/><line x1="627.5" y1="697" x2="627.5" y2="694" stroke="#646464"/><line x1="634.5" y1="183" x2="634.5" y2="198" stroke="#646464"/><line x1="634.5" y1="697" x2="634.5" y2="683" stroke="#646464"/><line x1="641.5" y1="183" x2="641.5" y2="187" stroke="#646464"/><line x1="641.5" y1="697" x2="641.5" y2="694" stroke="#646464"/><line x1="648.5" y1="183" x2="648.5" y2="187" stroke="#646464"/><line x1="648.5" y1="697" x2="648.5" y2="694" stroke="#646464"/><line x1="655.5" y1="183" x2="655.5" y2="187" stroke="#646464"/><line x1="655.5" y1="697" x2="655.5" y2="694" stroke="#646464"/><line x1="662.5" y1="183" x2="662.5" y2="187" stroke="#646464"/><line x1="662.5" y1="697" x2="662.5" y2="694" stroke="#646464"/><line x1="669.5" y1="183" x2="669.5" y2="191" stroke="#646464"/><line x1="669.5" y1="697" x2="669.5" y2="690" stroke="#646464"/><line x1="676.5" y1="183" x2="676.5" y2="187" stroke="#646464"/><line x1="676.5" y1="697" x2="676.5" y2="694" stroke="#646464"/><line x1="683.5" y1="183" x2="683.5" y2="187" stroke="#646464"/><line x1="683.5" y1="697" x2="683.5" y2="694" stroke="#646464"/><line x1="690.5" y1="183" x2="690.5" y2="187" stroke="#646464"/><line x1="690.5" y1="697" x2="690.5" y2="694" stroke="#646464"/><line x1="697.5" y1="183" x2="697.5" y2="187" stroke="#646464"/><line x1="697.5" y1="697" x2="697.5" y2="694" stroke="#646464"/><line x1="704.5" y1="183" x2="704.5" y2="198" stroke="#646464"/><line x1="704.5" y1="697" x2="704.5" y2="683" stroke="#646464"/><line x1="711.5" y1="183" x2="711.5" y2="187" stroke="#646464"/><line x1="711.5" y1="697" x2="711.5" y2="694" stroke="#646464"/><line x1="718.5" y1="183" x2="718.5" y2="187" stroke="#646464"/><line x1="718.5" y1="697" x2="718.5" y2="694" stroke="#646464"/><line x1="725.5" y1="183" x2="725.5" y2="187" stroke="#646464"/><line x1="725.5" y1="697" x2="725.5" y2="694" stroke="#646464"/><line x1="732.5" y1="183" x2="732.5" y2="187" stroke="#646464"/><line x1="732.5" y1="697" x2="732.5" y2="694" stroke="#646464"/><line x1="739.5" y1="183" x2="739.5" y2="191" stroke="#646464"/><line x1="739.5" y1="697" x2="739.5" y2="690" stroke="#646464"/><line x1="746.5" y1="183" x2="746.5" y2="187" stroke="#646464"/><line x1="746.5" y1="697" x2="746.5" y2="694" stroke="#646464"/><line x1="753.5" y1="183" x2="753.5" y2="187" stroke="#646464"/><line x1="753.5" y1="697" x2="753.5" y2="694" stroke="#646464"/><line x1="760.5" y1="183" x2="760.5" y2="187" stroke="#646464"/><line x1="760.5" y1="697" x2="760.5" y2="694" stroke="#646464"/><line x1="767.5" y1="183" x2="767.5" y2="187" stroke="#646464"/><line x1="767.5" y1="697" x2="767.5" y2="694" stroke="#646464"/><line x1="774.5" y1="183" x2="774.5" y2="198" stroke="#646464"/><line x1="774.5" y1="697" x2="774.5" y2="683" stroke="#646464"/><line x1="74" y1="183.5" x2="85" y2="183.5" stroke="#646464"/><line x1="775" y1="183.5" x2="764" y2="183.5" stroke="#646464"/><line x1="74" y1="188.5" x2="78" y2="188.5" stroke="#646464"/><line x1="775" y1="188.5" x2="772" y2="188.5" stroke="#646464"/><line x1="74" y1="193.5" x2="78" y2="193.5" stroke="#646464"/><line x1="775" y1="193.5" x2="772" y2="193.5" stroke="#646464"/><line x1="74" y1="198.5" x2="78" y2="198.5" stroke="#646464"/><line x1="775" y1="198.5" x2="772" y2="198.5" stroke="#646464"/><line x1="74" y1="203.5" x2="78" y2="203.5" stroke="#646464"/><line x1="775" y1="203.5" x2="772" y2="203.5" stroke="#646464"/><line x1="74" y1="208.5" x2="80" y2="208.5" stroke="#646464"/><line x1="775" y1="208.5" x2="769" y2="208.5" stroke="#646464"/><line x1="74" y1="213.5" x2="78" y2="213.5" stroke="#646464"/><line x1="775" y1="213.5" x2="772" y2="213.5" stroke="#646464"/><line x1="74" y1="218.5" x2="78" y2="218.5" stroke="#646464"/><line x1="775" y1="218.5" x2="772" y2="218.5" stroke="#646464"/><line x1="74" y1="224.5" x2="78" y2="224.5" stroke="#646464"/><line x1="775" y1="224.5" x2="772" y2="224.5" stroke="#646464"/><line x1="74" y1="229.5" x2="78" y2="229.5" stroke="#646464"/><line x1="775" y1="229.5" x2="772" y2="229.5" stroke="#646464"/><line x1="74" y1="234.5" x2="85" y2="234.5" stroke="#646464"/><line x1="775" y1="234.5" x2="764" y2="234.5" stroke="#646464"/><line x1="74" y1="239.5" x2="78" y2="239.5" stroke="#646464"/><line x1="775" y1="239.5" x2="772" y2="239.5" stroke="#646464"/><line x1="74" y1="244.5" x2="78" y2="244.5" stroke="#646464"/><line x1="775" y1="244.5" x2="772" y2="244.5" stroke="#646464"/><line x1="74" y1="249.5" x2="78" y2="249.5" stroke="#646464"/><line x1="775" y1="249.5" x2="772" y2="249.5" stroke="#646464"/><line x1="74" y1="254.5" x2="78" y2="254.5" stroke="#646464"/><line x1="775" y1="254.5" x2="772" y2="254.5" stroke="#646464"/><line x1="74" y1="260.5" x2="80" y2="260.5" stroke="#646464"/><line x1="775" y1="260.5" x2="769" y2="260.5" stroke="#646464"/><line x1="74" y1="265.5" x2="78" y2="265.5" stroke="#646464"/><line x1="775" y1="265.5" x2="772" y2="265.5" stroke="#646464"/><line x1="74" y1="270.5" x2="78" y2="270.5" stroke="#646464"/><line x1="775" y1="270.5" x2="772" y2="270.5" stroke="#646464"/><line x1="74" y1="275.5" x2="78" y2="275.5" stroke="#646464"/><line x1="775" y1="275.5" x2="772" y2="275.5" stroke="#646464"/><line x1="74" y1="280.5" x2="78" y2="280.5" stroke="#646464"/><line x1="775" y1="280.5" x2="772" y2="280.5" stroke="#646464"/><line x1="74" y1="285.5" x2="85" y2="285.5" stroke="#646464"/><line x1="775" y1="285.5" x2="764" y2="285.5" stroke="#646464"/><line x1="74" y1="290.5" x2="78" y2="290.5" stroke="#646464"/><line x1="775" y1="290.5" x2="772" y2="290.5" stroke="#646464"/><line x1="74" y1="296.5" x2="78" y2="296.5" stroke="#646464"/><line x1="775" y1="296.5" x2="772" y2="296.5" stroke="#646464"/><line x1="74" y1="301.5" x2="78" y2="301.5" stroke="#646464"/><line x1="775" y1="301.5" x2="772" y2="301.5" stroke="#646464"/><line x1="74" y1="306.5" x2="78" y2="306.5" stroke="#646464"/><line x1="775" y1="306.5" x2="772" y2="306.5" stroke="#646464"/><line x1="74" y1="311.5" x2="80" y2="311.5" stroke="#646464"/><line x1="775" y1="311.5" x2="769" y2="311.5" stroke="#646464"/><line x1="74" y1="316.5" x2="78" y2="316.5" stroke="#646464"/><line x1="775" y1="316.5" x2="772" y2="316.5" stroke="#646464"/><line x1="74" y1="321.5" x2="78" y2="321.5" stroke="#646464"/><line x1="775" y1="321.5" x2="772" y2="321.5" stroke="#646464"/><line x1="74" y1="326.5" x2="78" y2="326.5" stroke="#646464"/><line x1="775" y1="326.5" x2="772" y2="326.5" stroke="#646464"/><line x1="74" y1="332.5" x2="78" y2="332.5" stroke="#646464"/><line x1="775" y1="332.5" x2="772" y2="332.5" stroke="#646464"/><line x1="74" y1="337.5" x2="85" y2="337.5" stroke="#646464"/><line x1="775" y1="337.5" x2="764" y2="337.5" stroke="#646464"/><line x1="74" y1="342.5" x2="78" y2="342.5" stroke="#646464"/><line x1="775" y1="342.5" x2="772" y2="342.5" stroke="#646464"/><line x1="74" y1="347.5" x2="78" y2="347.5" stroke="#646464"/><line x1="775" y1="347.5" x2="772" y2="347.5" stroke="#646464"/><line x1="74" y1="352.5" x2="78" y2="352.5" stroke="#646464"/><line x1="775" y1="352.5" x2="772" y2="352.5" stroke="#646464"/><line x1="74" y1="357.5" x2="78" y2="357.5" stroke="#646464"/><line x1="775" y1="357.5" x2="772" y2="357.5" stroke="#646464"/><line x1="74" y1="362.5" x2="80" y2="362.5" stroke="#646464"/><line x1="775" y1="362.5" x2="769" y2="362.5" stroke="#646464"/><line x1="74" y1="368.5" x2="78" y2="368.5" stroke="#646464"/><line x1="775" y1="368.5" x2="772" y2="368.5" stroke="#646464"/><line x1="74" y1="373.5" x2="78" y2="373.5" stroke="#646464"/><line x1="775" y1="373.5" x2="772" y2="373.5" stroke="#646464"/><line x1="74" y1="378.5" x2="78" y2="378.5" stroke="#646464"/><line x1="775" y1="378.5" x2="772" y2="378.5" stroke="#646464"/><line x1="74" y1="383.5" x2="78" y2="383.5" stroke="#646464"/><line x1="775" y1="383.5" x2="772" y2="383.5" stroke="#646464"/><line x1="74" y1="388.5" x2="85" y2="388.5" stroke="#646464"/><line x1="775" y1="388.5" x2="764" y2="388.5" stroke="#646464"/><line x1="74" y1="393.5" x2="78" y2="393.5" stroke="#646464"/><line x1="775" y1="393.5" x2="772" y2="393.5" stroke="#646464"/><line x1="74" y1="398.5" x2="78" y2="398.5" stroke="#646464"/><line x1="775" y1="398.5" x2="772" y2="398.5" stroke="#646464"/><line x1="74" y1="404.5" x2="78" y2="404.5" stroke="#646464"/><line x1="775" y1="404.5" x2="772" y2="404.5" stroke="#646464"/><line x1="74" y1="409.5" x2="78" y2="409.5" stroke="#646464"/><line x1="775" y1="409.5" x2="772" y2="409.5" stroke="#646464"/><line x1="74" y1="414.5" x2="80" y2="414.5" stroke="#646464"/><line x1="775" y1="414.5" x2="769" y2="414.5" stroke="#646464"/><line x1="74" y1="419.5" x2="78" y2="419.5" stroke="#646464"/><line x1="775" y1="419.5" x2="772" y2="419.5" stroke="#646464"/><line x1="74" y1="424.5" x2="78" y2="424.5" stroke="#646464"/><line x1="775" y1="424.5" x2="772" y2="424.5" stroke="#646464"/><line x1="74" y1="429.5" x2="78" y2="429.5" stroke="#646464"/><line x1="775" y1="429.5" x2="772" y2="429.5" stroke="#646464"/><line x1="74" y1="434.5" x2="78" y2="434.5" stroke="#646464"/><line x1="775" y1="434.5" x2="772" y2="434.5" stroke="#646464"/><line x1="74" y1="440.5" x2="85" y2="440.5" stroke="#646464"/><line x1="775" y1="440.5" x2="764" y2="440.5" stroke="#646464"/><line x1="74" y1="445.5" x2="78" y2="445.5" stroke="#646464"/><line x1="775" y1="445.5" x2="772" y2="445.5" stroke="#646464"/><line x1="74" y1="450.5" x2="78" y2="450.5" stroke="#646464"/><line x1="775" y1="450.5" x2="772" y2="450.5" stroke="#646464"/><line x1="74" y1="455.5" x2="78" y2="455.5" stroke="#646464"/><line x1="775" y1="455.5" x2="772" y2="455.5" stroke="#646464"/><line x1="74" y1="460.5" x2="78" y2="460.5" stroke="#646464"/><line x1="775" y1="460.5" x2="772" y2="460.5" stroke="#646464"/><line x1="74" y1="465.5" x2="80" y2="465.5" stroke="#646464"/><line x1="775" y1="465.5" x2="769" y2="465.5" stroke="#646464"/><line x1="74" y1="470.5" x2="78" y2="470.5" stroke="#646464"/><line x1="775" y1="470.5" x2="772" y2="470.5" stroke="#646464"/><line x1="74" y1="475.5" x2="78" y2="475.5" stroke="#646464"/><line x1="775" y1="475.5" x2="772" y2="475.5" stroke="#646464"/><line x1="74" y1="481.5" x2="78" y2="481.5" stroke="#646464"/><line x1="775" y1="481.5" x2="772" y2="481.5" stroke="#646464"/><line x1="74" y1="486.5" x2="78" y2="486.5" stroke="#646464"/><line x1="775" y1="486.5" x2="772" y2="486.5" stroke="#646464"/><line x1="74" y1="491.5" x2="85" y2="491.5" stroke="#646464"/><line x1="775" y1="491.5" x2="764" y2="491.5" stroke="#646464"/><line x1="74" y1="496.5" x2="78" y2="496.5" stroke="#646464"/><line x1="775" y1="496.5" x2="772" y2="496.5" stroke="#646464"/><line x1="74" y1="501.5" x2="78" y2="501.5" stroke="#646464"/><line x1="775" y1="501.5" x2="772" y2="501.5" stroke="#646464"/><line x1="74" y1="506.5" x2="78" y2="506.5" stroke="#646464"/><line x1="775" y1="506.5" x2="772" y2="506.5" stroke="#646464"/><line x1="74" y1="511.5" x2="78" y2="511.5" stroke="#646464"/><line x1="775" y1="511.5" x2="772" y2="511.5" stroke="#646464"/><line x1="74" y1="517.5" x2="80" y2="517.5" stroke="#646464"/><line x1="775" y1="517.5" x2="769" y2="517.5" stroke="#646464"/><line x1="74" y1="522.5" x2="78" y2="522.5" stroke="#646464"/><line x1="775" y1="522.5" x2="772" y2="522.5" stroke="#646464"/><line x1="74" y1="527.5" x2="78" y2="527.5" stroke="#646464"/><line x1="775" y1="527.5" x2="772" y2="527.5" stroke="#646464"/><line x1="74" y1="532.5" x2="78" y2="532.5" stroke="#646464"/><line x1="775" y1="532.5" x2="772" y2="532.5" stroke="#646464"/><line x1="74" y1="537.5" x2="78" y2="537.5" stroke="#646464"/><line x1="775" y1="537.5" x2="772" y2="537.5" stroke="#646464"/><line x1="74" y1="542.5" x2="85" y2="542.5" stroke="#646464"/><line x1="775" y1="542.5" x2="764" y2="542.5" stroke="#646464"/><line x1="74" y1="547.5" x2="78" y2="547.5" stroke="#646464"/><line x1="775" y1="547.5" x2="772" y2="547.5" stroke="#646464"/><line x1="74" y1="553.5" x2="78" y2="553.5" stroke="#646464"/><line x1="775" y1="553.5" x2="772" y2="553.5" stroke="#646464"/><line x1="74" y1="558.5" x2="78" y2="558.5" stroke="#646464"/><line x1="775" y1="558.5" x2="772" y2="558.5" stroke="#646464"/><line x1="74" y1="563.5" x2="78" y2="563.5" stroke="#646464"/><line x1="775" y1="563.5" x2="772" y2="563.5" stroke="#646464"/><line x1="74" y1="568.5" x2="80" y2="568.5" stroke="#646464"/><line x1="775" y1="568.5" x2="769" y2="568.5" stroke="#646464"/><line x1="74" y1="573.5" x2="78" y2="573.5" stroke="#646464"/><line x1="775" y1="573.5" x2="772" y2="573.5" stroke="#646464"/><line x1="74" y1="578.5" x2="78" y2="578.5" stroke="#646464"/><line x1="775" y1="578.5" x2="772" y2="578.5" stroke="#646464"/><line x1="74" y1="583.5" x2="78" y2="583.5" stroke="#646464"/><line x1="775" y1="583.5" x2="772" y2="583.5" stroke="#646464"/><line x1="74" y1="589.5" x2="78" y2="589.5" stroke="#646464"/><line x1="775" y1="589.5" x2="772" y2="589.5" stroke="#646464"/><line x1="74" y1="594.5" x2="85" y2="594.5" stroke="#646464"/><line x1="775" y1="594.5" x2="764" y2="594.5" stroke="#646464"/><line x1="74" y1="599.5" x2="78" y2="599.5" stroke="#646464"/><line x1="775" y1="599.5" x2="772" y2="599.5" stroke="#646464"/><line x1="74" y1="604.5" x2="78" y2="604.5" stroke="#646464"/><line x1="775" y1="604.5" x2="772" y2="604.5" stroke="#646464"/><line x1="74" y1="609.5" x2="78" y2="609.5" stroke="#646464"/><line x1="775" y1="609.5" x2="772" y2="609.5" stroke="#646464"/><line x1="74" y1="614.5" x2="78" y2="614.5" stroke="#646464"/><line x1="775" y1="614.5" x2="772" y2="614.5" stroke="#646464"/><line x1="74" y1="619.5" x2="80" y2="619.5" stroke="#646464"/><line x1="775" y1="619.5" x2="769" y2="619.5" stroke="#646464"/><line x1="74" y1="625.5" x2="78" y2="625.5" stroke="#646464"/><line x1="775" y1="625.5" x2="772" y2="625.5" stroke="#646464"/><line x1="74" y1="630.5" x2="78" y2="630.5" stroke="#646464"/><line x1="775" y1="630.5" x2="772" y2="630.5" stroke="#646464"/><line x1="74" y1="635.5" x2="78" y2="635.5" stroke="#646464"/><line x1="775" y1="635.5" x2="772" y2="635.5" stroke="#646464"/><line x1="74" y1="640.5" x2="78" y2="640.5" stroke="#646464"/><line x1="775" y1="640.5" x2="772" y2="640.5" stroke="#646464"/><line x1="74" y1="645.5" x2="85" y2="645.5" stroke="#646464"/><line x1="775" y1="645.5" x2="764" y2="645.5" stroke="#646464"/><line x1="74" y1="650.5" x2="78" y2="650.5" stroke="#646464"/><line x1="775" y1="650.5" x2="772" y2="650.5" stroke="#646464"/><line x1="74" y1="655.5" x2="78" y2="655.5" stroke="#646464"/><line x1="775" y1="655.5" x2="772" y2="655.5" stroke="#646464"/><line x1="74" y1="661.5" x2="78" y2="661.5" stroke="#646464"/><line x1="775" y1="661.5" x2="772" y2="661.5" stroke="#646464"/><line x1="74" y1="666.5" x2="78" y2="666.5" stroke="#646464"/><line x1="775" y1="666.5" x2="772" y2="666.5" stroke="#646464"/><line x1="74" y1="671.5" x2="80" y2="671.5" stroke="#646464"/><line x1="775" y1="671.5" x2="769" y2="671.5" stroke="#646464"/><line x1="74" y1="676.5" x2="78" y2="676.5" stroke="#646464"/><line x1="775" y1="676.5" x2="772" y2="676.5" stroke="#646464"/><line x1="74" y1="681.5" x2="78" y2="681.5" stroke="#646464"/><line x1="775" y1="681.5" x2="772" y2="681.5" stroke="#646464"/><line x1="74" y1="686.5" x2="78" y2="686.5" stroke="#646464"/><line x1="775" y1="686.5" x2="772" y2="686.5" stroke="#646464"/><line x1="74" y1="691.5" x2="78" y2="691.5" stroke="#646464"/><line x1="775" y1="691.5" x2="772" y2="691.5" stroke="#646464"/><line x1="74" y1="697.5" x2="85" y2="697.5" stroke="#646464"/><line x1="775" y1="697.5" x2="764" y2="697.5" stroke="#646464"/><g shape-rendering="crispEdges" fill="none" stroke-width="3" stroke="#0000ff"><path d="M75 639.5 H80 M80 639.5 H83 M83 638.5 H85 M85 639.5 H92 M92 639.5 H97 M97 640.5 H99 M99 639.5 H102 M102 639.5 H111 M111 638.5 H113 M113 639.5 H118 M118 639.5 H121 M121 639.5 H130 M130 640.5 H132 M132 639.5 H137 M137 639.5 H142 M142 639.5 H149 M149 639.5 H154 M154 639.5 H159 M159 639.5 H162 M162 639.5 H167 M167 639.5 H176 M176 639.5 H185 M185 639.5 H194 M194 639.5 H199 M199 639.5 H204 M204 638.5 H206 M206 639.5 H213"/><path d="M214 286.5 H217 M217 287.5 H219 M219 288.5 H228 M228 288.5 H231 M231 288.5 H240 M240 288.5 H247 M247 288.5 H254 M254 289.5 H257 M257 289.5 H264 M264 289.5 H271 M271 289.5 H280 M280 288.5 H282 M282 288.5 H284 M284 289.5 H287 M287 288.5 H289 M289 289.5 H298 M298 289.5 H307 M307 289.5 H314 M314 290.5 H316 M316 289.5 H321 M321 289.5 H330 M330 288.5 H332 M332 289.5 H337 M337 289.5 H346 M346 289.5 H355 M355 288.5 H357 M357 289.5 H364 M364 289.5 H373 M373 289.5 H380 M380 289.5 H387 M387 289.5 H396 M396 289.5 H401 M401 288.5 H403 M403 289.5 H408 M408 290.5 H410 M410 289.5 H415 M415 289.5 H418 M418 289.5 H425 M425 289.5 H432 M432 289.5 H435 M435 289.5 H444 M444 289.5 H453 M453 289.5 H462 M462 288.5 H464 M464 288.5 H466 M466 289.5 H471 M471 289.5 H474 M474 289.5 H479 M479 289.5 H486 M486 289.5 H489 M489 289.5 H498 M498 289.5 H505 M505 289.5 H512 M512 289.5 H515 M515 289.5 H524 M524 289.5 H531 M531 288.5 H533 M533 289.5 H540 M540 289.5 H549 M549 289.5 H554 M554 289.5 H559 M559 289.5 H566 M566 289.5 H569 M569 289.5 H576 M576 289.5 H579 M579 289.5 H586 M586 289.5 H591 M591 289.5 H596 M596 289.5 H603 M603 289.5 H608 M608 289.5 H617 M617 289.5 H622 M622 289.5 H631 M631 289.5 H634 M634 289.5 H641 M641 289.5 H646 M646 289.5 H653 M653 289.5 H660 M660 289.5 H667 M667 288.5 H669 M669 289.5 H678 M678 289.5 H683 M683 289.5 H686 M686 289.5 H693 M693 289.5 H696 M696 289.5 H699 M699 289.5 H704 M704 289.5 H709 M709 289.5 H716 M716 288.5 H718 M718 289.5 H727 M727 289.5 H730 M730 289.5 H735 M735 289.5 H738 M738 289.5 H747 M747 289.5 H752 M752 289.5 H761 M761 289.5 H768 M768 289.5 H773 M773 290.5 H774"/><path d="M212.5 641 V630 M213.5 632 V497 M214.5 498 V286"/></g><g shape-rendering="crispEdges" fill="none" stroke-width="3" stroke="#158015"><path d="M75 595.5 H78 M78 595.5 H83 M83 595.5 H88 M88 595.5 H93 M93 596.5 H95 M95 595.5 H100 M100 595.5 H107 M107 595.5 H116 M116 595.5 H119 M119 595.5 H126 M126 595.5 H135 M135 595.5 H140 M140 595.5 H143 M143 595.5 H148 M148 595.5 H153 M153 595.5 H162 M162 595.5 H165 M165 595.5 H172 M172 595.5 H181 M181 595.5 H184 M184 595.5 H187 M187 595.5 H194 M194 596.5 H196 M196 594.5 H198 M198 595.5 H201 M201 595.5 H204 M204 595.5 H209 M209 595.5 H213"/><path d="M215 244.5 H217 M217 245.5 H226 M226 245.5 H231 M231 245.5 H238 M238 245.5 H243 M243 245.5 H248 M248 245.5 H254 M254 246.5 H257 M257 246.5 H266 M266 245.5 H268 M268 246.5 H271 M271 246.5 H276 M276 246.5 H283 M283 246.5 H288 M288 246.5 H293 M293 246.5 H296 M296 246.5 H305 M305 246.5 H310 M310 246.5 H319 M319 246.5 H328 M328 246.5 H333 M333 246.5 H336 M336 246.5 H339 M339 246.5 H348 M348 246.5 H351 M351 246.5 H358 M358 246.5 H361 M361 246.5 H366 M366 246.5 H369 M369 245.5 H371 M371 246.5 H376 M376 246.5 H381 M381 246.5 H388 M388 246.5 H397 M397 246.5 H400 M400 246.5 H405 M405 246.5 H408 M408 246.5 H411 M411 246.5 H418 M418 245.5 H420 M420 246.5 H423 M423 246.5 H426 M426 246.5 H433 M433 246.5 H442 M442 246.5 H449 M449 246.5 H452 M452 246.5 H457 M457 246.5 H462 M462 246.5 H467 M467 246.5 H474 M474 246.5 H479 M479 246.5 H484 M484 246.5 H487 M487 246.5 H490 M490 247.5 H492 M492 246.5 H497 M497 246.5 H502 M502 246.5 H505 M505 246.5 H514 M514 246.5 H523 M523 246.5 H530 M530 246.5 H535 M535 246.5 H540 M540 246.5 H547 M547 246.5 H552 M552 247.5 H554 M554 246.5 H561 M561 246.5 H564 M564 245.5 H566 M566 246.5 H573 M573 246.5 H580 M580 247.5 H582 M582 246.5 H589 M589 246.5 H596 M596 246.5 H603 M603 246.5 H610 M610 246.5 H617 M617 246.5 H622 M622 247.5 H624 M624 246.5 H633 M633 246.5 H638 M638 246.5 H641 M641 245.5 H643 M643 246.5 H648 M648 246.5 H651 M651 246.5 H658 M658 246.5 H663 M663 245.5 H665 M665 246.5 H670 M670 246.5 H679 M679 246.5 H688 M688 246.5 H693 M693 247.5 H695 M695 246.5 H704 M704 246.5 H709 M709 246.5 H712 M712 246.5 H717 M717 245.5 H719 M719 247.5 H721 M721 246.5 H724 M724 246.5 H733 M733 246.5 H736 M736 246.5 H741 M741 246.5 H744 M744 246.5 H747 M747 246.5 H750 M750 246.5 H753 M753 246.5 H762 M762 246.5 H765 M765 246.5 H770 M770 246.5 H774"/><path d="M212.5 597 V589 M213.5 590 V497 M214.5 498 V240"/></g><path shape-rendering="crispEdges" d="M215.5 497 V532" stroke="#0000ff" stroke-width="1"/><g shape-rendering="crispEdges"><rect x="122" y="597" width="3" height="1" fill="#158015"/><rect x="126" y="597" width="2" height="1" fill="#158015"/><rect x="127" y="593" width="2" height="1" fill="#158015"/><rect x="142" y="597" width="2" height="1" fill="#158015"/><rect x="155" y="597" width="1" height="1" fill="#158015"/><rect x="160" y="597" width="1" height="1" fill="#158015"/><rect x="168" y="597" width="1" height="1" fill="#158015"/><rect x="173" y="597" width="1" height="1" fill="#158015"/><rect x="192" y="593" width="2" height="1" fill="#158015"/><rect x="202" y="593" width="2" height="1" fill="#158015"/><rect x="96" y="637" width="2" height="1" fill="#0000ff"/><rect x="99" y="641" width="1" height="1" fill="#0000ff"/><rect x="100" y="637" width="2" height="1" fill="#0000ff"/><rect x="103" y="641" width="2" height="1" fill="#0000ff"/><rect x="104" y="637" width="2" height="1" fill="#0000ff"/><rect x="111" y="641" width="2" height="1" fill="#0000ff"/><rect x="112" y="637" width="2" height="1" fill="#0000ff"/><rect x="116" y="641" width="3" height="1" fill="#0000ff"/><rect x="117" y="637" width="2" height="1" fill="#0000ff"/><rect x="123" y="637" width="2" height="1" fill="#0000ff"/><rect x="128" y="641" width="2" height="1" fill="#0000ff"/><rect x="136" y="641" width="2" height="1" fill="#0000ff"/><rect x="148" y="641" width="1" height="1" fill="#0000ff"/><rect x="149" y="637" width="2" height="1" fill="#0000ff"/><rect x="153" y="641" width="3" height="1" fill="#0000ff"/><rect x="159" y="641" width="2" height="1" fill="#0000ff"/><rect x="181" y="641" width="2" height="1" fill="#0000ff"/><rect x="199" y="641" width="1" height="1" fill="#0000ff"/><rect x="277" y="244" width="2" height="1" fill="#158015"/><rect x="315" y="244" width="2" height="1" fill="#158015"/><rect x="395" y="248" width="2" height="1" fill="#158015"/><rect x="656" y="248" width="3" height="1" fill="#158015"/><rect x="767" y="244" width="2" height="1" fill="#158015"/><rect x="261" y="291" width="2" height="1" fill="#0000ff"/><rect x="312" y="291" width="2" height="1" fill="#0000ff"/><rect x="327" y="291" width="2" height="1" fill="#0000ff"/><rect x="405" y="291" width="2" height="1" fill="#0000ff"/><rect x="492" y="291" width="2" height="1" fill="#0000ff"/><rect x="493" y="287" width="2" height="1" fill="#0000ff"/><rect x="689" y="291" width="2" height="1" fill="#0000ff"/><rect x="703" y="291" width="2" height="1" fill="#0000ff"/><rect x="733" y="287" width="2" height="1" fill="#0000ff"/></g><path d="M206 186 L222 186 L214 199 Z" fill="#000"/><path d="M772.5 329.5 L772.5 344.5 L759.5 337 Z" fill="#008000" stroke="#000" stroke-width="1.3"/><path d="M95.5 587.5 L95.5 602.5 L109.5 595 Z" fill="#008000" stroke="#000" stroke-width="1.3"/><path d="M93.8 458.6 L93.8 473.4 L107.5 466 Z" fill="#0000ff" stroke="#000" stroke-width="1.3"/></svg>
<div class="t" style="left:76.5px;top:589.30px;font-size:12px;color:#008000;font-weight:bold;transform:scaleX(0.9126);transform-origin:0 0;">C4</div>
<div class="t" style="left:74px;top:460.30px;font-size:12px;color:#0000ff;font-weight:bold;transform:scaleX(1.0104);transform-origin:0 0;">C2</div>
<div class="t" style="left:34.2px;top:183.80px;font-size:12px;color:#008000;font-weight:bold;">4 V</div>
<div class="t" style="left:34.2px;top:233.60px;font-size:12px;color:#008000;font-weight:bold;">3.5 V</div>
<div class="t" style="left:34.2px;top:283.40px;font-size:12px;color:#008000;font-weight:bold;">3 V</div>
<div class="t" style="left:34.2px;top:334.40px;font-size:12px;color:#008000;font-weight:bold;">2.5 V</div>
<div class="t" style="left:34.2px;top:384.20px;font-size:12px;color:#008000;font-weight:bold;">2 V</div>
<div class="t" style="left:34.2px;top:434.80px;font-size:12px;color:#008000;font-weight:bold;">1.5 V</div>
<div class="t" style="left:34.2px;top:484.80px;font-size:12px;color:#008000;font-weight:bold;">1 V</div>
<div class="t" style="left:34.2px;top:535.00px;font-size:12px;color:#008000;font-weight:bold;">0.5 V</div>
<div class="t" style="left:34.2px;top:585.80px;font-size:12px;color:#008000;font-weight:bold;">0 V</div>
<div class="t" style="left:30.5px;top:635.40px;font-size:12px;color:#008000;font-weight:bold;">-0.5 V</div>
<div class="t" style="left:30.5px;top:685.50px;font-size:12px;color:#008000;font-weight:bold;">-1 V</div>
<div class="t" style="left:26px;top:161.60px;font-size:12px;color:#008000;font-weight:bold;">C4</div>
<div class="t" style="left:53.3px;top:700.80px;font-size:12px;color:#000;font-weight:bold;">-10 us</div>
<div class="t" style="left:130.3px;top:700.80px;font-size:12px;color:#000;font-weight:bold;">-5 us</div>
<div class="t" style="left:204.4px;top:700.80px;font-size:12px;color:#000;font-weight:bold;">0 us</div>
<div class="t" style="left:274.2px;top:700.80px;font-size:12px;color:#000;font-weight:bold;">5 us</div>
<div class="t" style="left:337.8px;top:700.80px;font-size:12px;color:#000;font-weight:bold;">10 us</div>
<div class="t" style="left:407.5px;top:700.80px;font-size:12px;color:#000;font-weight:bold;">15 us</div>
<div class="t" style="left:477.2px;top:700.80px;font-size:12px;color:#000;font-weight:bold;">20 us</div>
<div class="t" style="left:548.2px;top:700.80px;font-size:12px;color:#000;font-weight:bold;">25 us</div>
<div class="t" style="left:618.3px;top:700.80px;font-size:12px;color:#000;font-weight:bold;">30 us</div>
<div class="t" style="left:688.3px;top:700.80px;font-size:12px;color:#000;font-weight:bold;">35 us</div>
<div class="t" style="left:757.9px;top:700.80px;font-size:12px;color:#000;font-weight:bold;">40 us</div>
<div class="a" style="left:14px;top:698px;width:20px;height:20px;border:1px solid #6e6e6e;background:#fff"></div>
<div class="t" style="left:19px;top:701.95px;font-size:13px;color:#000;font-weight:bold;">X</div>
<div class="a" style="left:775px;top:161px;width:20px;height:20px;border:1px solid #6e6e6e;background:#fff"></div>
<div class="t" style="left:780px;top:164.95px;font-size:13px;color:#138a13;font-weight:bold;">Y</div>
<div class="a" style="left:75px;top:162px;width:27px;height:22px;border:1px solid #707070;border-radius:3px;background:#f4f8fc"></div>
<div class="a" style="left:78px;top:165px;width:21px;height:16px;background:#ff8c00"></div>
<div class="t" style="left:78px;width:21px;text-align:center;top:166.25px;font-size:13px;color:#6e6e6e;-webkit-text-stroke:0.5px #6e6e6e;letter-spacing:-0.3px">C1</div>
<div class="a" style="left:104px;top:162px;width:27px;height:22px;border:1px solid #707070;border-radius:3px;background:#f4f8fc"></div>
<div class="a" style="left:107px;top:165px;width:21px;height:16px;background:#0000ff"></div>
<div class="t" style="left:107px;width:21px;text-align:center;top:166.25px;font-size:13px;color:#fff;-webkit-text-stroke:0.5px #fff;letter-spacing:-0.3px">C2</div>
<div class="a" style="left:133px;top:162px;width:27px;height:22px;border:1px solid #707070;border-radius:3px;background:#f4f8fc"></div>
<div class="a" style="left:136px;top:165px;width:21px;height:16px;background:#ff1493"></div>
<div class="t" style="left:136px;width:21px;text-align:center;top:166.25px;font-size:13px;color:#7a5a6a;-webkit-text-stroke:0.5px #7a5a6a;letter-spacing:-0.3px">C3</div>
<div class="a" style="left:162px;top:162px;width:27px;height:22px;border:1px solid #3c7fb1;border-radius:3px;background:#bfe0f5"></div>
<div class="a" style="left:165px;top:165px;width:21px;height:16px;background:#008000"></div>
<div class="t" style="left:165px;width:21px;text-align:center;top:166.25px;font-size:13px;color:#fff;-webkit-text-stroke:0.5px #fff;letter-spacing:-0.3px">C4</div>
<div class="a" style="left:191px;top:162px;width:27px;height:22px;border:1px solid #707070;border-radius:3px;background:#f4f8fc"></div>
<div class="a" style="left:194px;top:165px;width:21px;height:16px;background:#ff4500"></div>
<div class="t" style="left:194px;width:21px;text-align:center;top:166.25px;font-size:13px;color:#6e6e6e;-webkit-text-stroke:0.5px #6e6e6e;letter-spacing:-0.3px">M1</div>
<div class="a" style="left:221px;top:162px;width:27px;height:22px;border:1px solid #707070;border-radius:3px;background:#f4f8fc"></div>
<div class="a" style="left:224px;top:165px;width:21px;height:16px;background:#4682b4"></div>
<div class="t" style="left:224px;width:21px;text-align:center;top:166.25px;font-size:13px;color:#6e6e6e;-webkit-text-stroke:0.5px #6e6e6e;letter-spacing:-0.3px">M2</div>
<div class="a" style="left:255px;top:162px;width:90px;height:20px;border:1px solid #6e6e6e;background:#fff"></div>
<div class="t" style="left:255px;width:90px;text-align:center;top:166.03px;font-size:13.5px;color:#138a13;font-weight:bold">Trig'd</div>
<div class="t" style="left:352.6px;top:163.74px;font-size:12.3px;color:#555;font-weight:bold;transform:scaleX(1.0396);transform-origin:0 0;">2016/01/04</div>
<div class="t" style="left:420.90000000000003px;top:163.74px;font-size:12.3px;color:#555;font-weight:bold;transform:scaleX(1.0044);transform-origin:0 0;">16:15:06.715</div>
<div class="t" style="left:497.6px;top:163.74px;font-size:12.3px;color:#555;font-weight:bold;transform:scaleX(0.83);transform-origin:0 0;">-</div>
<div class="t" style="left:504.5px;top:163.74px;font-size:12.3px;color:#555;font-weight:bold;transform:scaleX(0.9977);transform-origin:0 0;">8192</div>
<div class="t" style="left:535.3000000000001px;top:163.74px;font-size:12.3px;color:#555;font-weight:bold;transform:scaleX(0.9487);transform-origin:0 0;">Samples</div>
<div class="t" style="left:586.8000000000001px;top:163.74px;font-size:12.3px;color:#555;font-weight:bold;transform:scaleX(0.8869);transform-origin:0 0;">at</div>
<div class="t" style="left:599.0px;top:163.74px;font-size:12.3px;color:#555;font-weight:bold;transform:scaleX(1.0598);transform-origin:0 0;">40</div>
<div class="t" style="left:614.7px;top:163.74px;font-size:12.3px;color:#555;font-weight:bold;transform:scaleX(0.894);transform-origin:0 0;">MHz</div>
<div class="t" style="left:639.3000000000001px;top:163.74px;font-size:12.3px;color:#555;font-weight:bold;transform:scaleX(1.4047);transform-origin:0 0;">/</div>
<div class="t" style="left:645.6px;top:163.74px;font-size:12.3px;color:#555;font-weight:bold;transform:scaleX(0.9355);transform-origin:0 0;">25</div>
<div class="t" style="left:660.5px;top:163.74px;font-size:12.3px;color:#555;font-weight:bold;transform:scaleX(0.8499);transform-origin:0 0;">ns</div>
<div class="t" style="left:675.4px;top:163.74px;font-size:12.3px;color:#555;font-weight:bold;transform:scaleX(0.857);transform-origin:0 0;">Zoom:</div>
<div class="t" style="left:709.6px;top:163.74px;font-size:12.3px;color:#555;font-weight:bold;transform:scaleX(0.8939);transform-origin:0 0;">4.00</div>
<div class="t" style="left:732.6px;top:163.74px;font-size:12.3px;color:#555;font-weight:bold;transform:scaleX(1.1335);transform-origin:0 0;">X</div>
<svg class="a" style="left:748px;top:163.5px;" width="17" height="14" viewBox="0 0 17 14">
<defs><linearGradient id="docg" x1="0" y1="0" x2="1" y2="1"><stop offset="0" stop-color="#f4f8fe"/><stop offset="1" stop-color="#b8cce8"/></linearGradient></defs>
<rect x="0.5" y="4.5" width="11" height="9" fill="url(#docg)" stroke="#9ab0d0"/>
<path d="M0.5 13.5 H11.5 V7" stroke="#111" stroke-width="1.2" fill="none"/>
<path d="M2 11 H4 M5 11 H10" stroke="#9ab0d8" stroke-width="1.3"/>
<circle cx="3.3" cy="7.3" r="0.9" fill="#d02020"/>
<path d="M2.5 7.5 L8.5 2.2" stroke="#f0d030" stroke-width="3.6"/>
<path d="M2.5 7.5 L8.5 2.2" stroke="#201800" stroke-width="3.6" stroke-dasharray="1.1 1.1"/>
<ellipse cx="11" cy="3.8" rx="3.3" ry="2.4" fill="#f0c818"/>
<path d="M13.5 1.5 L16.2 1.5 L16.2 8.5 Z" fill="#10b010"/>
</svg>
<svg class="a" style="left:766px;top:171px;" width="5" height="3" viewBox="0 0 5 3"><path d="M0 0 H5 L2.5 3 Z" fill="#000"/></svg>
<div class="a" style="left:803px;top:136px;width:5px;height:608px;background:#6b6b6b"></div>
<div class="a" style="left:808px;top:136px;width:252px;height:1px;background:#f0f0f0"></div>
<div class="a" style="left:808px;top:137px;width:252px;height:607px;background:#bfcddd"></div>
<div class="a" style="left:808px;top:137px;width:250px;height:19px;background:#bccbdc"></div>
<div class="t" style="left:813px;top:141.64px;font-size:11.6px;color:#4a5068;transform:scaleX(0.8863);transform-origin:0 0;">Measurements</div>
<svg class="a" style="left:1025px;top:142px;" width="11" height="12" viewBox="0 0 11 12"><path d="M1 11 L4.5 7.5" stroke="#707070" stroke-width="1.4"/><ellipse cx="5.2" cy="6.3" rx="2.6" ry="2.3" fill="#f4f4f4" stroke="#505050" stroke-width="0.9"/><circle cx="7.8" cy="3.2" r="2.4" fill="#fafafa" stroke="#505050" stroke-width="0.9"/></svg>
<svg class="a" style="left:1043px;top:142px;" width="11" height="12" viewBox="0 0 11 12"><path d="M1.8 2 L9.2 10 M9.2 2 L1.8 10" stroke="#000" stroke-width="3.2" stroke-linecap="round"/><path d="M2 2.2 L5.5 5.8 L9 2.2" stroke="#9a9a9a" stroke-width="1.6" fill="none" stroke-linecap="round"/></svg>
<div class="a" style="left:1057px;top:142px;width:1px;height:12px;background:#e8eef4"></div>
<div class="a" style="left:810px;top:156px;width:248px;height:25px;background:linear-gradient(#fdfdfd,#f5f5f5 60%,#ececec);border-radius:4px 0 0 0"></div>
<svg class="a" style="left:812px;top:161px;" width="17" height="17" viewBox="0 0 17 17"><path d="M5.5 1.5 H10.5 V5.5 H14.5 V10.5 H10.5 V14.5 H5.5 V10.5 H1.5 V5.5 H5.5 Z" fill="#22aa22" stroke="#000" stroke-width="1.4"/><path d="M6.8 3 V6.8 H3" stroke="#ffff40" stroke-width="1.3" fill="none"/></svg>
<div class="t" style="left:830.8px;top:162.40px;font-size:12px;color:#000;transform:scaleX(1.0303);transform-origin:0 0;">Add</div>
<svg class="a" style="left:863px;top:161px;" width="15" height="15" viewBox="0 0 15 15"><path d="M2.8 2.8 L12.2 12.2 M12.2 2.8 L2.8 12.2" stroke="#c00000" stroke-width="5" stroke-linecap="round"/><path d="M2.8 2.8 L12.2 12.2 M12.2 2.8 L2.8 12.2" stroke="#ff1a1a" stroke-width="3" stroke-linecap="round"/><path d="M3.5 3 L6 5.5 M11.5 3 L9.5 5" stroke="#ff9a9a" stroke-width="0.8"/></svg>
<div class="a" style="left:886px;top:162px;width:1px;height:16px;background:#c8c8c8"></div>
<svg class="a" style="left:892px;top:160px;" width="14" height="17" viewBox="0 0 14 17"><path d="M7 1 L13 8 L9.5 8 L9.5 16 L4.5 16 L4.5 8 L1 8 Z" fill="#22bb22" stroke="#000" stroke-width="1.1"/><path d="M5.5 15 V7.5 H3" stroke="#ffff50" stroke-width="1" fill="none"/></svg>
<svg class="a" style="left:915px;top:160px;" width="14" height="17" viewBox="0 0 14 17"><path d="M7 16 L13 9 L9.5 9 L9.5 1 L4.5 1 L4.5 9 L1 9 Z" fill="#22bb22" stroke="#000" stroke-width="1.1"/><path d="M5.5 2 V9.5 H3" stroke="#ffff50" stroke-width="1" fill="none"/></svg>
<div class="a" style="left:810px;top:182px;width:248px;height:560px;background:#ababab;border:1px solid #000;border-bottom-width:2px"></div>
<div class="a" style="left:811px;top:183px;width:1px;height:557px;background:#d8d8d8"></div>
<div class="a" style="left:811px;top:739px;width:246px;height:1px;background:#d8d8d8"></div>
<div class="a" style="left:812px;top:183px;width:245px;height:22px;background:linear-gradient(#fff 0,#fff 55%,#f2f2f2 56%,#ededed)"></div>
<div class="a" style="left:812px;top:204px;width:245px;height:1px;background:#d5d5d5"></div>
<div class="a" style="left:819px;top:186px;width:1px;height:17px;background:#e0e0e0"></div>
<div class="a" style="left:854px;top:186px;width:1px;height:17px;background:#e0e0e0"></div>
<div class="a" style="left:955px;top:186px;width:1px;height:17px;background:#e0e0e0"></div>
<div class="t" style="left:826px;top:188.74px;font-size:11.6px;color:#000;transform:scaleX(0.92);transform-origin:0 0;">Ch</div>
<div class="t" style="left:862px;top:188.74px;font-size:11.6px;color:#000;transform:scaleX(0.92);transform-origin:0 0;">Name</div>
<div class="t" style="left:963px;top:188.74px;font-size:11.6px;color:#000;transform:scaleX(0.92);transform-origin:0 0;">Value</div>
<div class="a" style="left:812px;top:205px;width:245px;height:22px;background:#3399ff"></div>
<div class="a" style="left:812px;top:205px;width:8px;height:22px;background:#ff8c00"></div>
<div class="a" style="left:812px;top:226px;width:245px;height:1px;background:#a0a0a0"></div>
<div class="a" style="left:854px;top:205px;width:1px;height:22px;background:#a0a0a0"></div>
<div class="a" style="left:955px;top:205px;width:1px;height:22px;background:#a0a0a0"></div>
<div class="t" style="left:822.5px;top:210.74px;font-size:11.6px;color:#fff;transform:scaleX(0.92);transform-origin:0 0;">C1</div>
<div class="t" style="left:858px;top:210.74px;font-size:11.6px;color:#fff;transform:scaleX(0.92);transform-origin:0 0;">Amplitude</div>
<div class="t" style="left:959px;top:210.74px;font-size:11.6px;color:#fff;transform:scaleX(0.92);transform-origin:0 0;">10 mV</div>
<div class="a" style="left:812px;top:227px;width:245px;height:22px;background:#fff"></div>
<div class="a" style="left:812px;top:227px;width:8px;height:22px;background:#ff8c00"></div>
<div class="a" style="left:812px;top:248px;width:245px;height:1px;background:#a0a0a0"></div>
<div class="a" style="left:854px;top:227px;width:1px;height:22px;background:#a0a0a0"></div>
<div class="a" style="left:955px;top:227px;width:1px;height:22px;background:#a0a0a0"></div>
<div class="t" style="left:822.5px;top:232.74px;font-size:11.6px;color:#000;transform:scaleX(0.92);transform-origin:0 0;">C1</div>
<div class="t" style="left:858px;top:232.74px;font-size:11.6px;color:#000;transform:scaleX(0.92);transform-origin:0 0;">Period Avg.</div>
<div class="t" style="left:959px;top:232.74px;font-size:11.6px;color:#000;transform:scaleX(0.92);transform-origin:0 0;">1.1406 us</div>
<div class="a" style="left:812px;top:249px;width:245px;height:22px;background:#fff"></div>
<div class="a" style="left:812px;top:249px;width:8px;height:22px;background:#ff8c00"></div>
<div class="a" style="left:812px;top:270px;width:245px;height:1px;background:#a0a0a0"></div>
<div class="a" style="left:854px;top:249px;width:1px;height:22px;background:#a0a0a0"></div>
<div class="a" style="left:955px;top:249px;width:1px;height:22px;background:#a0a0a0"></div>
<div class="t" style="left:822.5px;top:254.74px;font-size:11.6px;color:#000;transform:scaleX(0.92);transform-origin:0 0;">C1</div>
<div class="t" style="left:858px;top:254.74px;font-size:11.6px;color:#000;transform:scaleX(0.92);transform-origin:0 0;">Average</div>
<div class="t" style="left:959px;top:254.74px;font-size:11.6px;color:#000;transform:scaleX(0.92);transform-origin:0 0;">-20 mV</div>
<div class="a" style="left:812px;top:271px;width:245px;height:22px;background:#fff"></div>
<div class="a" style="left:812px;top:271px;width:8px;height:22px;background:#ff8c00"></div>
<div class="a" style="left:812px;top:292px;width:245px;height:1px;background:#a0a0a0"></div>
<div class="a" style="left:854px;top:271px;width:1px;height:22px;background:#a0a0a0"></div>
<div class="a" style="left:955px;top:271px;width:1px;height:22px;background:#a0a0a0"></div>
<div class="t" style="left:822.5px;top:276.74px;font-size:11.6px;color:#000;transform:scaleX(0.92);transform-origin:0 0;">C1</div>
<div class="t" style="left:858px;top:276.74px;font-size:11.6px;color:#000;transform:scaleX(0.92);transform-origin:0 0;">Frequency Avg.</div>
<div class="t" style="left:959px;top:276.74px;font-size:11.6px;color:#000;transform:scaleX(0.92);transform-origin:0 0;">876.7 kHz</div>
<div class="a" style="left:812px;top:293px;width:245px;height:22px;background:#fff"></div>
<div class="a" style="left:812px;top:293px;width:8px;height:22px;background:#0000ff"></div>
<div class="a" style="left:812px;top:314px;width:245px;height:1px;background:#a0a0a0"></div>
<div class="a" style="left:854px;top:293px;width:1px;height:22px;background:#a0a0a0"></div>
<div class="a" style="left:955px;top:293px;width:1px;height:22px;background:#a0a0a0"></div>
<div class="t" style="left:822.5px;top:298.74px;font-size:11.6px;color:#000;transform:scaleX(0.92);transform-origin:0 0;">C2</div>
<div class="t" style="left:858px;top:298.74px;font-size:11.6px;color:#000;transform:scaleX(0.92);transform-origin:0 0;">Frequency Avg.</div>
<div class="t" style="left:959px;top:298.74px;font-size:11.6px;color:#000;transform:scaleX(0.92);transform-origin:0 0;">? Hz</div>
<div class="a" style="left:812px;top:315px;width:245px;height:22px;background:#fff"></div>
<div class="a" style="left:812px;top:315px;width:8px;height:22px;background:#ff1493"></div>
<div class="a" style="left:812px;top:336px;width:245px;height:1px;background:#a0a0a0"></div>
<div class="a" style="left:854px;top:315px;width:1px;height:22px;background:#a0a0a0"></div>
<div class="a" style="left:955px;top:315px;width:1px;height:22px;background:#a0a0a0"></div>
<div class="t" style="left:822.5px;top:320.74px;font-size:11.6px;color:#000;transform:scaleX(0.92);transform-origin:0 0;">C3</div>
<div class="t" style="left:858px;top:320.74px;font-size:11.6px;color:#000;transform:scaleX(0.92);transform-origin:0 0;">Frequency Avg.</div>
<div class="t" style="left:959px;top:320.74px;font-size:11.6px;color:#000;transform:scaleX(0.92);transform-origin:0 0;">? Hz</div>
<div class="a" style="left:812px;top:337px;width:245px;height:22px;background:#fff"></div>
<div class="a" style="left:812px;top:337px;width:8px;height:22px;background:#ff1493"></div>
<div class="a" style="left:812px;top:358px;width:245px;height:1px;background:#a0a0a0"></div>
<div class="a" style="left:854px;top:337px;width:1px;height:22px;background:#a0a0a0"></div>
<div class="a" style="left:955px;top:337px;width:1px;height:22px;background:#a0a0a0"></div>
<div class="t" style="left:822.5px;top:342.74px;font-size:11.6px;color:#000;transform:scaleX(0.92);transform-origin:0 0;">C3</div>
<div class="t" style="left:858px;top:342.74px;font-size:11.6px;color:#000;transform:scaleX(0.92);transform-origin:0 0;">Average</div>
<div class="t" style="left:959px;top:342.74px;font-size:11.6px;color:#000;transform:scaleX(0.92);transform-origin:0 0;">90 mV</div>
<div class="a" style="left:1060px;top:79px;width:156px;height:665px;background:#f0f0f0"></div>
<div class="a" style="left:1061px;top:150px;width:154px;height:245px;background:#6e6e6e"></div>
<div class="a" style="left:1061px;top:79px;width:154px;height:71px;border:3px solid #000;background:#f0f0f0"></div>
<div class="a" style="left:1064px;top:82px;width:148px;height:20px;background:linear-gradient(#fdfdfd,#f6f6f6 50%,#ededed)"></div>
<div class="a" style="left:1064px;top:84px;width:13px;height:13px;border:1px solid #8f8f8f;background:linear-gradient(135deg,#dcdcdc,#fafafa)"></div>
<div class="a" style="left:1066px;top:86px;width:9px;height:9px;border:1px solid #c4c4c4;background:linear-gradient(135deg,#d8d8d8,#f6f6f6)"></div>
<svg class="a" style="left:1064px;top:84px;" width="13" height="13" viewBox="0 0 13 13"><path d="M3 6.5 L5.5 10 L10.5 2.5" stroke="#2a3f8f" stroke-width="1.8" fill="none"/></svg>
<div class="t" style="left:1081.5px;top:84.64px;font-size:11.6px;color:#000;transform:scaleX(0.92);transform-origin:0 0;">Time</div>
<svg class="a" style="left:1185px;top:84px;" width="17" height="14" viewBox="0 0 17 14">
<defs><linearGradient id="docg" x1="0" y1="0" x2="1" y2="1"><stop offset="0" stop-color="#f4f8fe"/><stop offset="1" stop-color="#b8cce8"/></linearGradient></defs>
<rect x="0.5" y="4.5" width="11" height="9" fill="url(#docg)" stroke="#9ab0d0"/>
<path d="M0.5 13.5 H11.5 V7" stroke="#111" stroke-width="1.2" fill="none"/>
<path d="M2 11 H4 M5 11 H10" stroke="#9ab0d8" stroke-width="1.3"/>
<circle cx="3.3" cy="7.3" r="0.9" fill="#d02020"/>
<path d="M2.5 7.5 L8.5 2.2" stroke="#f0d030" stroke-width="3.6"/>
<path d="M2.5 7.5 L8.5 2.2" stroke="#201800" stroke-width="3.6" stroke-dasharray="1.1 1.1"/>
<ellipse cx="11" cy="3.8" rx="3.3" ry="2.4" fill="#f0c818"/>
<path d="M13.5 1.5 L16.2 1.5 L16.2 8.5 Z" fill="#10b010"/>
</svg>
<svg class="a" style="left:1203px;top:91px;" width="5" height="3" viewBox="0 0 5 3"><path d="M0 0 H5 L2.5 3 Z" fill="#000"/></svg>
<div class="t" style="left:1066px;top:107.14px;font-size:11.6px;color:#000;transform:scaleX(0.92);transform-origin:0 0;">Pos.</div>
<div class="t" style="left:1066px;top:130.14px;font-size:11.6px;color:#000;transform:scaleX(0.92);transform-origin:0 0;">Base</div>
<div class="a" style="left:1115px;top:102px;width:97px;height:20px;background:#fff;border:1px solid #a9a9a9"></div>
<div class="a" style="left:1193px;top:103px;width:1px;height:18px;background:#a9a9a9"></div>
<div class="t" style="left:1119px;top:105.14px;font-size:11.6px;color:#000;transform:scaleX(0.92);transform-origin:0 0;">15 us</div>
<svg class="a" style="left:1201px;top:111px;shape-rendering:crispEdges" width="6" height="3" viewBox="0 0 6 3"><path d="M0 0 L6 0 L3 3 Z" fill="#000"/></svg>
<div class="a" style="left:1115px;top:125px;width:97px;height:20px;background:#fff;border:1px solid #a9a9a9"></div>
<div class="a" style="left:1193px;top:126px;width:1px;height:18px;background:#a9a9a9"></div>
<div class="t" style="left:1119px;top:128.14px;font-size:11.6px;color:#000;transform:scaleX(0.92);transform-origin:0 0;">5 us/div</div>
<svg class="a" style="left:1201px;top:134px;shape-rendering:crispEdges" width="6" height="3" viewBox="0 0 6 3"><path d="M0 0 L6 0 L3 3 Z" fill="#000"/></svg>
<div class="a" style="left:1061px;top:152px;width:154px;height:23px;border:3px solid #ff8c00;background:#f0f0f0"></div>
<div class="a" style="left:1064px;top:155px;width:148px;height:17px;background:linear-gradient(#fdfdfd,#f6f6f6 50%,#ededed)"></div>
<div class="a" style="left:1064px;top:157px;width:13px;height:13px;border:1px solid #8f8f8f;background:linear-gradient(135deg,#dcdcdc,#fafafa)"></div>
<div class="a" style="left:1066px;top:159px;width:9px;height:9px;border:1px solid #c4c4c4;background:linear-gradient(135deg,#d8d8d8,#f6f6f6)"></div>
<div class="t" style="left:1081.5px;top:157.64px;font-size:11.6px;color:#000;transform:scaleX(0.92);transform-origin:0 0;">C1</div>
<svg class="a" style="left:1185px;top:157px;" width="17" height="14" viewBox="0 0 17 14">
<defs><linearGradient id="docg" x1="0" y1="0" x2="1" y2="1"><stop offset="0" stop-color="#f4f8fe"/><stop offset="1" stop-color="#b8cce8"/></linearGradient></defs>
<rect x="0.5" y="4.5" width="11" height="9" fill="url(#docg)" stroke="#9ab0d0"/>
<path d="M0.5 13.5 H11.5 V7" stroke="#111" stroke-width="1.2" fill="none"/>
<path d="M2 11 H4 M5 11 H10" stroke="#9ab0d8" stroke-width="1.3"/>
<circle cx="3.3" cy="7.3" r="0.9" fill="#d02020"/>
<path d="M2.5 7.5 L8.5 2.2" stroke="#f0d030" stroke-width="3.6"/>
<path d="M2.5 7.5 L8.5 2.2" stroke="#201800" stroke-width="3.6" stroke-dasharray="1.1 1.1"/>
<ellipse cx="11" cy="3.8" rx="3.3" ry="2.4" fill="#f0c818"/>
<path d="M13.5 1.5 L16.2 1.5 L16.2 8.5 Z" fill="#10b010"/>
</svg>
<svg class="a" style="left:1203px;top:164px;" width="5" height="3" viewBox="0 0 5 3"><path d="M0 0 H5 L2.5 3 Z" fill="#000"/></svg>
<div class="a" style="left:1061px;top:177px;width:154px;height:70px;border:3px solid #0000ff;background:#f0f0f0"></div>
<div class="a" style="left:1064px;top:180px;width:148px;height:20px;background:linear-gradient(#fdfdfd,#f6f6f6 50%,#ededed)"></div>
<div class="a" style="left:1064px;top:182px;width:13px;height:13px;border:1px solid #8f8f8f;background:linear-gradient(135deg,#dcdcdc,#fafafa)"></div>
<div class="a" style="left:1066px;top:184px;width:9px;height:9px;border:1px solid #c4c4c4;background:linear-gradient(135deg,#d8d8d8,#f6f6f6)"></div>
<svg class="a" style="left:1064px;top:182px;" width="13" height="13" viewBox="0 0 13 13"><path d="M3 6.5 L5.5 10 L10.5 2.5" stroke="#2a3f8f" stroke-width="1.8" fill="none"/></svg>
<div class="t" style="left:1081.5px;top:182.64px;font-size:11.6px;color:#000;transform:scaleX(0.92);transform-origin:0 0;">C2</div>
<svg class="a" style="left:1185px;top:182px;" width="17" height="14" viewBox="0 0 17 14">
<defs><linearGradient id="docg" x1="0" y1="0" x2="1" y2="1"><stop offset="0" stop-color="#f4f8fe"/><stop offset="1" stop-color="#b8cce8"/></linearGradient></defs>
<rect x="0.5" y="4.5" width="11" height="9" fill="url(#docg)" stroke="#9ab0d0"/>
<path d="M0.5 13.5 H11.5 V7" stroke="#111" stroke-width="1.2" fill="none"/>
<path d="M2 11 H4 M5 11 H10" stroke="#9ab0d8" stroke-width="1.3"/>
<circle cx="3.3" cy="7.3" r="0.9" fill="#d02020"/>
<path d="M2.5 7.5 L8.5 2.2" stroke="#f0d030" stroke-width="3.6"/>
<path d="M2.5 7.5 L8.5 2.2" stroke="#201800" stroke-width="3.6" stroke-dasharray="1.1 1.1"/>
<ellipse cx="11" cy="3.8" rx="3.3" ry="2.4" fill="#f0c818"/>
<path d="M13.5 1.5 L16.2 1.5 L16.2 8.5 Z" fill="#10b010"/>
</svg>
<svg class="a" style="left:1203px;top:189px;" width="5" height="3" viewBox="0 0 5 3"><path d="M0 0 H5 L2.5 3 Z" fill="#000"/></svg>
<div class="t" style="left:1066px;top:204.14px;font-size:11.6px;color:#000;transform:scaleX(0.92);transform-origin:0 0;">Offset</div>
<div class="t" style="left:1066px;top:227.14px;font-size:11.6px;color:#000;transform:scaleX(0.92);transform-origin:0 0;">Range</div>
<div class="a" style="left:1115px;top:198px;width:96px;height:21px;background:#fff"></div>
<div class="a" style="left:1195px;top:199px;width:15px;height:19px;background:#f0f0f0"></div>
<div class="t" style="left:1119px;top:201.44px;font-size:11.6px;color:#000;transform:scaleX(0.92);transform-origin:0 0;">-250 mV</div>
<svg class="a" style="left:1200px;top:207px;shape-rendering:crispEdges" width="6" height="3" viewBox="0 0 6 3"><path d="M0 0 L6 0 L3 3 Z" fill="#000"/></svg>
<div class="a" style="left:1115px;top:221px;width:96px;height:21px;background:#fff"></div>
<div class="a" style="left:1195px;top:222px;width:15px;height:19px;background:#f0f0f0"></div>
<div class="t" style="left:1119px;top:224.44px;font-size:11.6px;color:#000;transform:scaleX(0.92);transform-origin:0 0;">500 mV/div</div>
<svg class="a" style="left:1200px;top:230px;shape-rendering:crispEdges" width="6" height="3" viewBox="0 0 6 3"><path d="M0 0 L6 0 L3 3 Z" fill="#000"/></svg>
<div class="a" style="left:1061px;top:249px;width:154px;height:23px;border:3px solid #ff1493;background:#f0f0f0"></div>
<div class="a" style="left:1064px;top:252px;width:148px;height:17px;background:linear-gradient(#fdfdfd,#f6f6f6 50%,#ededed)"></div>
<div class="a" style="left:1064px;top:254px;width:13px;height:13px;border:1px solid #8f8f8f;background:linear-gradient(135deg,#dcdcdc,#fafafa)"></div>
<div class="a" style="left:1066px;top:256px;width:9px;height:9px;border:1px solid #c4c4c4;background:linear-gradient(135deg,#d8d8d8,#f6f6f6)"></div>
<div class="t" style="left:1081.5px;top:254.64px;font-size:11.6px;color:#000;transform:scaleX(0.92);transform-origin:0 0;">C3</div>
<svg class="a" style="left:1185px;top:254px;" width="17" height="14" viewBox="0 0 17 14">
<defs><linearGradient id="docg" x1="0" y1="0" x2="1" y2="1"><stop offset="0" stop-color="#f4f8fe"/><stop offset="1" stop-color="#b8cce8"/></linearGradient></defs>
<rect x="0.5" y="4.5" width="11" height="9" fill="url(#docg)" stroke="#9ab0d0"/>
<path d="M0.5 13.5 H11.5 V7" stroke="#111" stroke-width="1.2" fill="none"/>
<path d="M2 11 H4 M5 11 H10" stroke="#9ab0d8" stroke-width="1.3"/>
<circle cx="3.3" cy="7.3" r="0.9" fill="#d02020"/>
<path d="M2.5 7.5 L8.5 2.2" stroke="#f0d030" stroke-width="3.6"/>
<path d="M2.5 7.5 L8.5 2.2" stroke="#201800" stroke-width="3.6" stroke-dasharray="1.1 1.1"/>
<ellipse cx="11" cy="3.8" rx="3.3" ry="2.4" fill="#f0c818"/>
<path d="M13.5 1.5 L16.2 1.5 L16.2 8.5 Z" fill="#10b010"/>
</svg>
<svg class="a" style="left:1203px;top:261px;" width="5" height="3" viewBox="0 0 5 3"><path d="M0 0 H5 L2.5 3 Z" fill="#000"/></svg>
<div class="a" style="left:1061px;top:274px;width:154px;height:70px;border:3px solid #008000;background:#f0f0f0"></div>
<div class="a" style="left:1064px;top:277px;width:148px;height:20px;background:linear-gradient(#fdfdfd,#f6f6f6 50%,#ededed)"></div>
<div class="a" style="left:1064px;top:279px;width:13px;height:13px;border:1px solid #8f8f8f;background:linear-gradient(135deg,#dcdcdc,#fafafa)"></div>
<div class="a" style="left:1066px;top:281px;width:9px;height:9px;border:1px solid #c4c4c4;background:linear-gradient(135deg,#d8d8d8,#f6f6f6)"></div>
<svg class="a" style="left:1064px;top:279px;" width="13" height="13" viewBox="0 0 13 13"><path d="M3 6.5 L5.5 10 L10.5 2.5" stroke="#2a3f8f" stroke-width="1.8" fill="none"/></svg>
<div class="t" style="left:1081.5px;top:279.64px;font-size:11.6px;color:#000;transform:scaleX(0.92);transform-origin:0 0;">C4</div>
<svg class="a" style="left:1185px;top:279px;" width="17" height="14" viewBox="0 0 17 14">
<defs><linearGradient id="docg" x1="0" y1="0" x2="1" y2="1"><stop offset="0" stop-color="#f4f8fe"/><stop offset="1" stop-color="#b8cce8"/></linearGradient></defs>
<rect x="0.5" y="4.5" width="11" height="9" fill="url(#docg)" stroke="#9ab0d0"/>
<path d="M0.5 13.5 H11.5 V7" stroke="#111" stroke-width="1.2" fill="none"/>
<path d="M2 11 H4 M5 11 H10" stroke="#9ab0d8" stroke-width="1.3"/>
<circle cx="3.3" cy="7.3" r="0.9" fill="#d02020"/>
<path d="M2.5 7.5 L8.5 2.2" stroke="#f0d030" stroke-width="3.6"/>
<path d="M2.5 7.5 L8.5 2.2" stroke="#201800" stroke-width="3.6" stroke-dasharray="1.1 1.1"/>
<ellipse cx="11" cy="3.8" rx="3.3" ry="2.4" fill="#f0c818"/>
<path d="M13.5 1.5 L16.2 1.5 L16.2 8.5 Z" fill="#10b010"/>
</svg>
<svg class="a" style="left:1203px;top:286px;" width="5" height="3" viewBox="0 0 5 3"><path d="M0 0 H5 L2.5 3 Z" fill="#000"/></svg>
<div class="t" style="left:1066px;top:301.14px;font-size:11.6px;color:#000;transform:scaleX(0.92);transform-origin:0 0;">Offset</div>
<div class="t" style="left:1066px;top:324.14px;font-size:11.6px;color:#000;transform:scaleX(0.92);transform-origin:0 0;">Range</div>
<div class="a" style="left:1115px;top:295px;width:96px;height:21px;background:#fff"></div>
<div class="a" style="left:1195px;top:296px;width:15px;height:19px;background:#f0f0f0"></div>
<div class="t" style="left:1119px;top:298.44px;font-size:11.6px;color:#000;transform:scaleX(0.92);transform-origin:0 0;">-1.5 V</div>
<svg class="a" style="left:1200px;top:304px;shape-rendering:crispEdges" width="6" height="3" viewBox="0 0 6 3"><path d="M0 0 L6 0 L3 3 Z" fill="#000"/></svg>
<div class="a" style="left:1115px;top:318px;width:96px;height:21px;background:#fff"></div>
<div class="a" style="left:1195px;top:319px;width:15px;height:19px;background:#f0f0f0"></div>
<div class="t" style="left:1119px;top:321.44px;font-size:11.6px;color:#000;transform:scaleX(0.92);transform-origin:0 0;">500 mV/div</div>
<svg class="a" style="left:1200px;top:327px;shape-rendering:crispEdges" width="6" height="3" viewBox="0 0 6 3"><path d="M0 0 L6 0 L3 3 Z" fill="#000"/></svg>
<div class="a" style="left:1061px;top:346px;width:154px;height:23px;border:3px solid #ff4500;background:#f0f0f0"></div>
<div class="a" style="left:1064px;top:349px;width:148px;height:17px;background:linear-gradient(#fdfdfd,#f6f6f6 50%,#ededed)"></div>
<div class="a" style="left:1064px;top:351px;width:13px;height:13px;border:1px solid #8f8f8f;background:linear-gradient(135deg,#dcdcdc,#fafafa)"></div>
<div class="a" style="left:1066px;top:353px;width:9px;height:9px;border:1px solid #c4c4c4;background:linear-gradient(135deg,#d8d8d8,#f6f6f6)"></div>
<div class="t" style="left:1081.5px;top:351.64px;font-size:11.6px;color:#000;transform:scaleX(0.92);transform-origin:0 0;">M1</div>
<svg class="a" style="left:1162px;top:351px;" width="17" height="14" viewBox="0 0 17 14">
<defs><linearGradient id="docg" x1="0" y1="0" x2="1" y2="1"><stop offset="0" stop-color="#f4f8fe"/><stop offset="1" stop-color="#b8cce8"/></linearGradient></defs>
<rect x="0.5" y="4.5" width="11" height="9" fill="url(#docg)" stroke="#9ab0d0"/>
<path d="M0.5 13.5 H11.5 V7" stroke="#111" stroke-width="1.2" fill="none"/>
<path d="M2 11 H4 M5 11 H10" stroke="#9ab0d8" stroke-width="1.3"/>
<circle cx="3.3" cy="7.3" r="0.9" fill="#d02020"/>
<path d="M2.5 7.5 L8.5 2.2" stroke="#f0d030" stroke-width="3.6"/>
<path d="M2.5 7.5 L8.5 2.2" stroke="#201800" stroke-width="3.6" stroke-dasharray="1.1 1.1"/>
<ellipse cx="11" cy="3.8" rx="3.3" ry="2.4" fill="#f0c818"/>
<path d="M13.5 1.5 L16.2 1.5 L16.2 8.5 Z" fill="#10b010"/>
</svg>
<svg class="a" style="left:1180px;top:358px;" width="5" height="3" viewBox="0 0 5 3"><path d="M0 0 H5 L2.5 3 Z" fill="#000"/></svg>
<svg class="a" style="left:1193px;top:351px;" width="15" height="15" viewBox="0 0 15 15"><path d="M2.8 2.8 L12.2 12.2 M12.2 2.8 L2.8 12.2" stroke="#c00000" stroke-width="5" stroke-linecap="round"/><path d="M2.8 2.8 L12.2 12.2 M12.2 2.8 L2.8 12.2" stroke="#ff1a1a" stroke-width="3" stroke-linecap="round"/><path d="M3.5 3 L6 5.5 M11.5 3 L9.5 5" stroke="#ff9a9a" stroke-width="0.8"/></svg>
<div class="a" style="left:1061px;top:371px;width:154px;height:23px;border:3px solid #4682b4;background:#f0f0f0"></div>
<div class="a" style="left:1064px;top:374px;width:148px;height:17px;background:linear-gradient(#fdfdfd,#f6f6f6 50%,#ededed)"></div>
<div class="a" style="left:1064px;top:376px;width:13px;height:13px;border:1px solid #8f8f8f;background:linear-gradient(135deg,#dcdcdc,#fafafa)"></div>
<div class="a" style="left:1066px;top:378px;width:9px;height:9px;border:1px solid #c4c4c4;background:linear-gradient(135deg,#d8d8d8,#f6f6f6)"></div>
<div class="t" style="left:1081.5px;top:376.64px;font-size:11.6px;color:#000;transform:scaleX(0.92);transform-origin:0 0;">M2</div>
<svg class="a" style="left:1162px;top:376px;" width="17" height="14" viewBox="0 0 17 14">
<defs><linearGradient id="docg" x1="0" y1="0" x2="1" y2="1"><stop offset="0" stop-color="#f4f8fe"/><stop offset="1" stop-color="#b8cce8"/></linearGradient></defs>
<rect x="0.5" y="4.5" width="11" height="9" fill="url(#docg)" stroke="#9ab0d0"/>
<path d="M0.5 13.5 H11.5 V7" stroke="#111" stroke-width="1.2" fill="none"/>
<path d="M2 11 H4 M5 11 H10" stroke="#9ab0d8" stroke-width="1.3"/>
<circle cx="3.3" cy="7.3" r="0.9" fill="#d02020"/>
<path d="M2.5 7.5 L8.5 2.2" stroke="#f0d030" stroke-width="3.6"/>
<path d="M2.5 7.5 L8.5 2.2" stroke="#201800" stroke-width="3.6" stroke-dasharray="1.1 1.1"/>
<ellipse cx="11" cy="3.8" rx="3.3" ry="2.4" fill="#f0c818"/>
<path d="M13.5 1.5 L16.2 1.5 L16.2 8.5 Z" fill="#10b010"/>
</svg>
<svg class="a" style="left:1180px;top:383px;" width="5" height="3" viewBox="0 0 5 3"><path d="M0 0 H5 L2.5 3 Z" fill="#000"/></svg>
<svg class="a" style="left:1193px;top:376px;" width="15" height="15" viewBox="0 0 15 15"><path d="M2.8 2.8 L12.2 12.2 M12.2 2.8 L2.8 12.2" stroke="#c00000" stroke-width="5" stroke-linecap="round"/><path d="M2.8 2.8 L12.2 12.2 M12.2 2.8 L2.8 12.2" stroke="#ff1a1a" stroke-width="3" stroke-linecap="round"/><path d="M3.5 3 L6 5.5 M11.5 3 L9.5 5" stroke="#ff9a9a" stroke-width="0.8"/></svg>
</body></html>
